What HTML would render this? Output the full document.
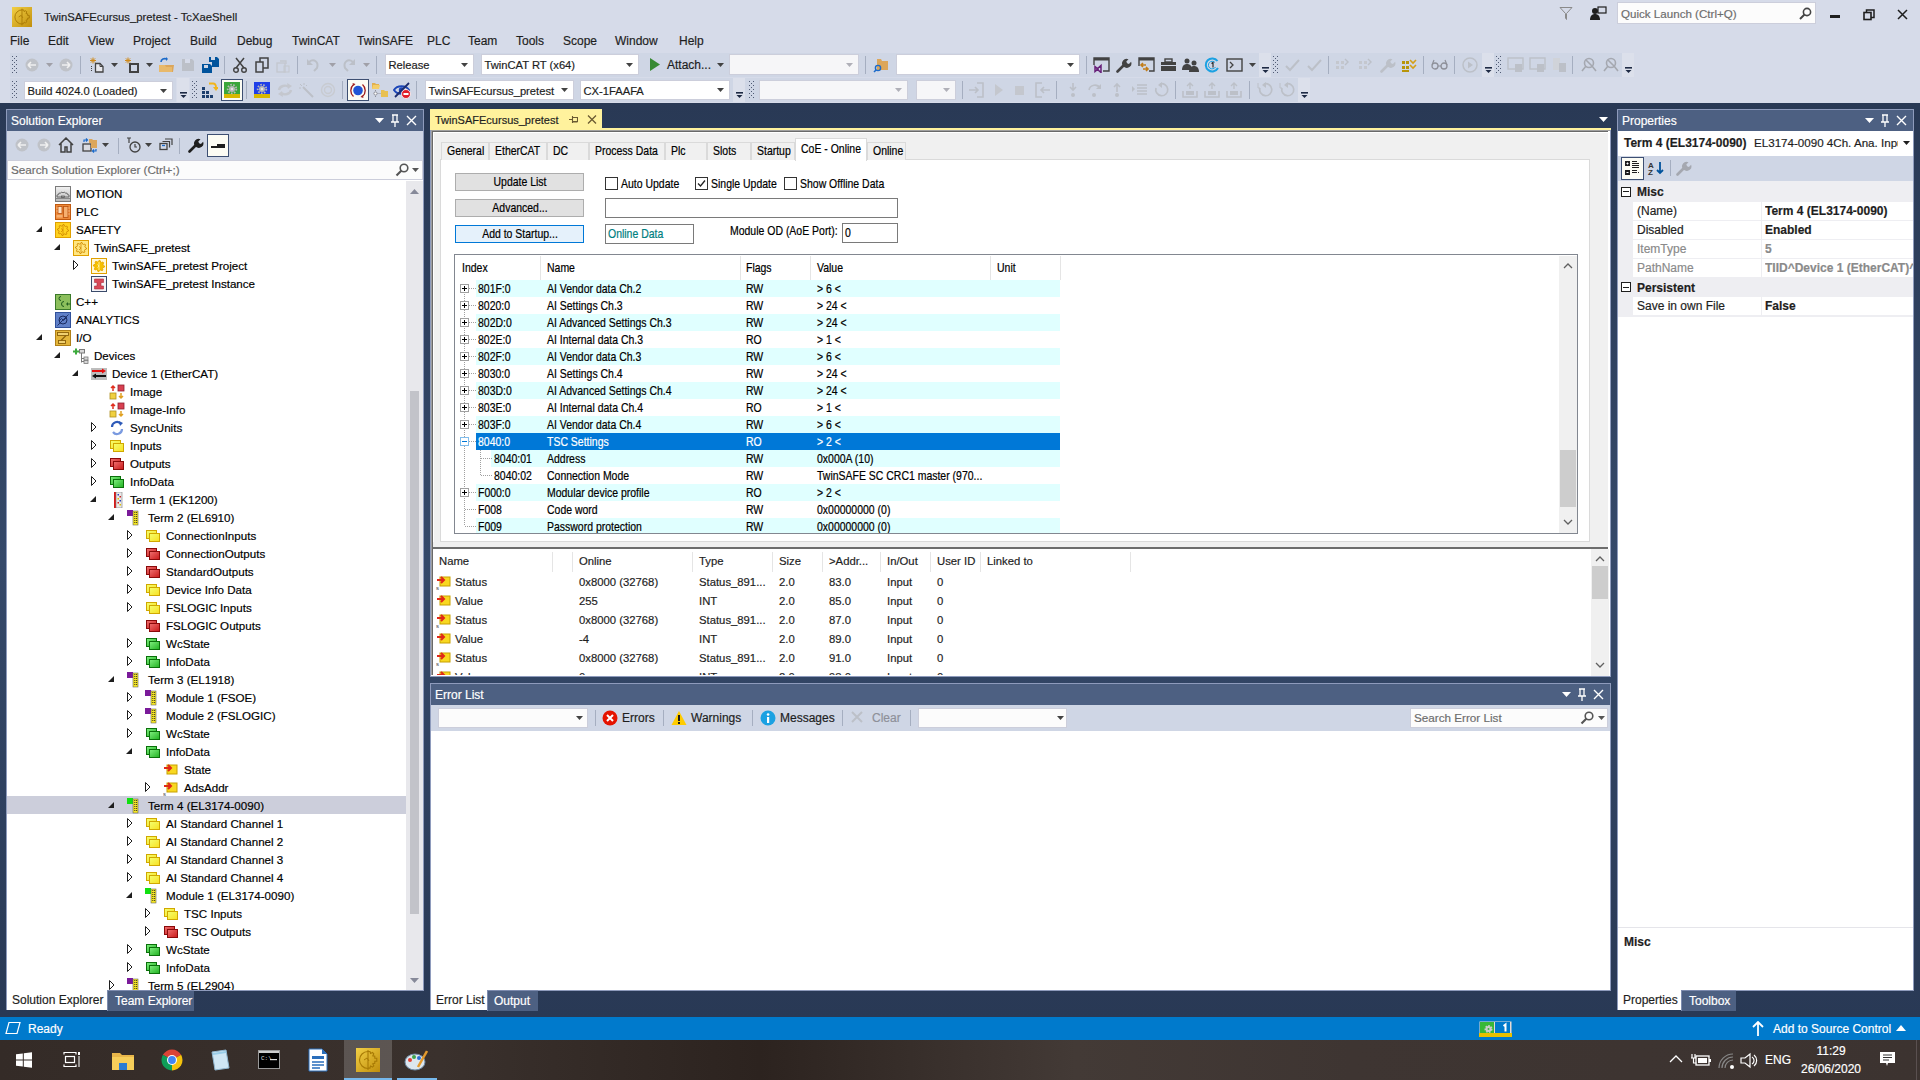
<!DOCTYPE html>
<html><head><meta charset="utf-8"><title>TwinSAFEcursus_pretest - TcXaeShell</title>
<style>
*{box-sizing:border-box;margin:0;padding:0}
html,body{width:1920px;height:1080px;overflow:hidden;background:#293955;font-family:"Liberation Sans",sans-serif;font-size:12px;color:#1e1e1e}
.a{position:absolute}
.t{position:absolute;white-space:nowrap;-webkit-text-stroke:0.18px currentColor}
svg{display:block}
</style></head><body>
<div class="a" style="left:0;top:103px;width:1920px;height:914px;background:linear-gradient(to bottom,#293955 0%,#35496A 50%,#293955 100%)"></div>
<div class="a" style="left:0px;top:0px;width:1920px;height:103px;background:#D6DBE9;"></div>
<svg class="a" style="left:12px;top:7px;" width="20" height="20" viewBox="0 0 20 20"><g transform="scale(0.8333)"><defs><linearGradient id="tg2" x1="0" y1="0" x2="1" y2="1"><stop offset="0" stop-color="#F2CF45"/><stop offset="1" stop-color="#C08E0C"/></linearGradient></defs><rect x="0" y="0" width="24" height="24" fill="url(#tg2)"/><path d="M12 3.5A8.5 8.5 0 0 0 12 20.5" fill="none" stroke="#A87A05" stroke-width="1.1"/><path d="M12 3.5h2l.5 2 2-1 1.3 1.3-1 2 2 .5v2h2v3h-2v2l-2 .5 1 2-1.3 1.3-2-1-.5 2h-2" fill="none" stroke="#A87A05" stroke-width="1.1"/><path d="M12 2v20" stroke="#A87A05" stroke-width="1.1"/><path d="M8 12l3-2 2 3" fill="none" stroke="#A87A05"/></g></svg>
<div class="t" style="left:44px;top:9.0px;line-height:16px;font-size:11.3px;color:#1E1E1E;">TwinSAFEcursus_pretest - TcXaeShell</div>
<svg class="a" style="left:1559px;top:6px;" width="14" height="15" viewBox="0 0 14 15"><path d="M1 1.5h12L7.5 7.5v6L6.5 12V7.5z" fill="none" stroke="#8A8A8A" stroke-width="1"/></svg>
<svg class="a" style="left:1590px;top:6px;" width="17" height="15" viewBox="0 0 17 15"><circle cx="5" cy="5" r="3" fill="#1E1E1E"/><path d="M0 14c0-4 2-6 5-6s5 2 5 6z" fill="#1E1E1E"/><rect x="8" y="1" width="8" height="6" fill="none" stroke="#1E1E1E" stroke-width="1.2"/></svg>
<div class="a" style="left:1617px;top:2px;width:199px;height:22px;background:#FCFCFC;border:1px solid #CCCEDB;"></div>
<div class="t" style="left:1621px;top:6.0px;line-height:16px;font-size:11.6px;color:#6D6D6D;">Quick Launch (Ctrl+Q)</div>
<svg class="a" style="left:1799px;top:7px;" width="13" height="14" viewBox="0 0 13 14"><circle cx="8" cy="5" r="3.6" fill="none" stroke="#444" stroke-width="1.6"/><path d="M5.5 7.5L1 12" stroke="#444" stroke-width="2"/></svg>
<div class="a" style="left:1830px;top:15px;width:10px;height:2.5px;background:#1E1E1E;"></div>
<svg class="a" style="left:1863px;top:9px;" width="12" height="12" viewBox="0 0 12 12"><rect x="1" y="3.5" width="7" height="7" fill="none" stroke="#1E1E1E" stroke-width="1.6"/><path d="M3.5 3.5V1H11v7.5H8" fill="none" stroke="#1E1E1E" stroke-width="1.5"/></svg>
<svg class="a" style="left:1897px;top:9px;" width="11" height="11" viewBox="0 0 11 11"><path d="M1 1L10 10M10 1L1 10" stroke="#1E1E1E" stroke-width="1.5"/></svg>
<div class="t" style="left:10px;top:33.0px;line-height:16px;font-size:12px;color:#1E1E1E;">File</div>
<div class="t" style="left:48px;top:33.0px;line-height:16px;font-size:12px;color:#1E1E1E;">Edit</div>
<div class="t" style="left:88px;top:33.0px;line-height:16px;font-size:12px;color:#1E1E1E;">View</div>
<div class="t" style="left:133px;top:33.0px;line-height:16px;font-size:12px;color:#1E1E1E;">Project</div>
<div class="t" style="left:190px;top:33.0px;line-height:16px;font-size:12px;color:#1E1E1E;">Build</div>
<div class="t" style="left:237px;top:33.0px;line-height:16px;font-size:12px;color:#1E1E1E;">Debug</div>
<div class="t" style="left:292px;top:33.0px;line-height:16px;font-size:12px;color:#1E1E1E;">TwinCAT</div>
<div class="t" style="left:357px;top:33.0px;line-height:16px;font-size:12px;color:#1E1E1E;">TwinSAFE</div>
<div class="t" style="left:427px;top:33.0px;line-height:16px;font-size:12px;color:#1E1E1E;">PLC</div>
<div class="t" style="left:468px;top:33.0px;line-height:16px;font-size:12px;color:#1E1E1E;">Team</div>
<div class="t" style="left:516px;top:33.0px;line-height:16px;font-size:12px;color:#1E1E1E;">Tools</div>
<div class="t" style="left:563px;top:33.0px;line-height:16px;font-size:12px;color:#1E1E1E;">Scope</div>
<div class="t" style="left:615px;top:33.0px;line-height:16px;font-size:12px;color:#1E1E1E;">Window</div>
<div class="t" style="left:679px;top:33.0px;line-height:16px;font-size:12px;color:#1E1E1E;">Help</div>
<div class="a" style="left:10px;top:53px;width:1249px;height:24px;background:#CFD6E5;"></div>
<div class="a" style="left:1271px;top:53px;width:211px;height:24px;background:#CFD6E5;"></div>
<div class="a" style="left:1494px;top:53px;width:128px;height:24px;background:#CFD6E5;"></div>
<div class="a" style="left:10px;top:78px;width:166px;height:24px;background:#CFD6E5;"></div>
<div class="a" style="left:190px;top:78px;width:543px;height:24px;background:#CFD6E5;"></div>
<div class="a" style="left:745px;top:78px;width:553px;height:24px;background:#CFD6E5;"></div>
<svg class="a" style="left:12px;top:56px;" width="5" height="17" viewBox="0 0 5 17"><rect x="0" y="0" width="1" height="1" fill="#505B74"/><rect x="4" y="0" width="1" height="1" fill="#505B74"/><rect x="0" y="4" width="1" height="1" fill="#505B74"/><rect x="4" y="4" width="1" height="1" fill="#505B74"/><rect x="0" y="8" width="1" height="1" fill="#505B74"/><rect x="4" y="8" width="1" height="1" fill="#505B74"/><rect x="0" y="12" width="1" height="1" fill="#505B74"/><rect x="4" y="12" width="1" height="1" fill="#505B74"/><rect x="0" y="16" width="1" height="1" fill="#505B74"/><rect x="4" y="16" width="1" height="1" fill="#505B74"/><rect x="2" y="2" width="1" height="1" fill="#505B74"/><rect x="2" y="6" width="1" height="1" fill="#505B74"/><rect x="2" y="10" width="1" height="1" fill="#505B74"/><rect x="2" y="14" width="1" height="1" fill="#505B74"/></svg>
<svg class="a" style="left:25px;top:58px;" width="14" height="14" viewBox="0 0 14 14"><circle cx="7" cy="7" r="6.5" fill="#BFC2C8"/><path d="M3 7h8M3 7l3-3M3 7l3 3" stroke="#F0F0F0" stroke-width="1.6" fill="none"/></svg>
<svg class="a" style="left:46px;top:63px;" width="7" height="4" viewBox="0 0 7 4"><path d="M0 0h7L3.5 4z" fill="#A0A0A8"/></svg>
<svg class="a" style="left:59px;top:58px;" width="14" height="14" viewBox="0 0 14 14"><circle cx="7" cy="7" r="6.5" fill="#BFC2C8"/><path d="M3 7h8M11 7l-3-3M11 7l-3 3" stroke="#F0F0F0" stroke-width="1.6" fill="none"/></svg>
<div class="a" style="left:80px;top:56px;width:1px;height:18px;background:#A5AEC0;"></div>
<svg class="a" style="left:89px;top:57px;" width="16" height="16" viewBox="0 0 16 16"><path d="M4 0.5v6M1 3.5h6M1.9 1.4l4.2 4.2M6.1 1.4L1.9 5.6" stroke="#D08A1A" stroke-width="1"/><path d="M6.5 6.5h4.5l3 3v5.5h-7.5z" fill="#E8E8EC" stroke="#424242" stroke-width="1.3"/><path d="M11 6.5v3h3" fill="none" stroke="#424242" stroke-width="1"/><path d="M2.5 9v5.5" stroke="#424242" stroke-width="1" stroke-dasharray="1 1"/></svg>
<svg class="a" style="left:111px;top:63px;" width="7" height="4" viewBox="0 0 7 4"><path d="M0 0h7L3.5 4z" fill="#424242"/></svg>
<svg class="a" style="left:124px;top:57px;" width="16" height="16" viewBox="0 0 16 16"><path d="M4 0.5v6M1 3.5h6M1.9 1.4l4.2 4.2M6.1 1.4L1.9 5.6" stroke="#D08A1A" stroke-width="1"/><rect x="6" y="7" width="8" height="8" fill="none" stroke="#424242" stroke-width="2"/></svg>
<svg class="a" style="left:146px;top:63px;" width="7" height="4" viewBox="0 0 7 4"><path d="M0 0h7L3.5 4z" fill="#424242"/></svg>
<svg class="a" style="left:158px;top:57px;" width="17" height="16" viewBox="0 0 17 16"><path d="M1 10v5h14l1-7H6z" fill="#DCA65A"/><path d="M1 8h6l1 2h6v5H1z" fill="#E8B96B"/><path d="M3 5c0-3 3-4 6-3" fill="none" stroke="#1B6AC9" stroke-width="1.6"/><path d="M8 0l2 2-2 2" fill="#1B6AC9"/></svg>
<svg class="a" style="left:180px;top:57px;" width="16" height="16" viewBox="0 0 16 16"><path d="M2 2h10l2 2v10H2z" fill="#BCC0C8"/><rect x="5" y="2" width="5" height="4" fill="#D6DBE9"/></svg>
<svg class="a" style="left:202px;top:56px;" width="18" height="17" viewBox="0 0 18 17"><path d="M0 8h8l2 2v7H0z" fill="#00539C"/><path d="M7 1h8l2 2v8h-7V6H7z" fill="#00539C"/><rect x="2" y="9" width="4" height="3" fill="#CFD6E5"/><rect x="9" y="1" width="4" height="3" fill="#CFD6E5"/></svg>
<div class="a" style="left:224px;top:56px;width:1px;height:18px;background:#A5AEC0;"></div>
<svg class="a" style="left:233px;top:57px;" width="14" height="16" viewBox="0 0 14 16"><path d="M3 1l8 10M11 1L3 11" stroke="#424242" stroke-width="1.5"/><circle cx="3" cy="13" r="2.3" fill="none" stroke="#424242" stroke-width="1.4"/><circle cx="11" cy="13" r="2.3" fill="none" stroke="#424242" stroke-width="1.4"/></svg>
<svg class="a" style="left:255px;top:57px;" width="14" height="16" viewBox="0 0 14 16"><rect x="1" y="5" width="7" height="10" fill="none" stroke="#424242" stroke-width="1.5"/><path d="M5 5V1h8v10H8" fill="none" stroke="#424242" stroke-width="1.5"/></svg>
<svg class="a" style="left:276px;top:57px;" width="14" height="16" viewBox="0 0 14 16"><rect x="1" y="6" width="8" height="9" fill="none" stroke="#C4C7CE" stroke-width="1.3"/><path d="M4 4h6v3" fill="none" stroke="#C4C7CE" stroke-width="1.3"/><rect x="8" y="9" width="5" height="6" fill="none" stroke="#C4C7CE"/></svg>
<div class="a" style="left:297px;top:56px;width:1px;height:18px;background:#A5AEC0;"></div>
<svg class="a" style="left:306px;top:57px;" width="14" height="16" viewBox="0 0 14 16"><path d="M3 5c5-4 10 0 8 6l-3 3" fill="none" stroke="#BCC0C8" stroke-width="2"/><path d="M1 2v6h6z" fill="#BCC0C8"/></svg>
<svg class="a" style="left:329px;top:63px;" width="7" height="4" viewBox="0 0 7 4"><path d="M0 0h7L3.5 4z" fill="#A0A0A8"/></svg>
<svg class="a" style="left:342px;top:57px;" width="14" height="16" viewBox="0 0 14 16"><path d="M11 5C6 1 1 5 3 11l3 3" fill="none" stroke="#BCC0C8" stroke-width="2"/><path d="M13 2v6H7z" fill="#BCC0C8"/></svg>
<svg class="a" style="left:363px;top:63px;" width="7" height="4" viewBox="0 0 7 4"><path d="M0 0h7L3.5 4z" fill="#A0A0A8"/></svg>
<div class="a" style="left:376px;top:56px;width:1px;height:18px;background:#A5AEC0;"></div>
<div class="a" style="left:385px;top:54px;width:89px;height:21px;background:#FFFFFF;border:1px solid #CCCEDB;"></div>
<div class="t" style="left:388.5px;top:57.0px;line-height:16px;font-size:11.2px;color:#1e1e1e;">Release</div>
<svg class="a" style="left:461px;top:62.5px;" width="7" height="4" viewBox="0 0 7 4"><path d="M0 0h7L3.5 4z" fill="#424242"/></svg>
<div class="a" style="left:481px;top:54px;width:158px;height:21px;background:#FFFFFF;border:1px solid #CCCEDB;"></div>
<div class="t" style="left:484.5px;top:57.0px;line-height:16px;font-size:11.2px;color:#1e1e1e;">TwinCAT RT (x64)</div>
<svg class="a" style="left:626px;top:62.5px;" width="7" height="4" viewBox="0 0 7 4"><path d="M0 0h7L3.5 4z" fill="#424242"/></svg>
<svg class="a" style="left:650px;top:58px;" width="10" height="13" viewBox="0 0 10 13"><path d="M0 0L10 6.5L0 13z" fill="#388A34"/></svg>
<div class="t" style="left:667px;top:57.0px;line-height:16px;font-size:12px;color:#1e1e1e;">Attach...</div>
<svg class="a" style="left:717px;top:63px;" width="7" height="4" viewBox="0 0 7 4"><path d="M0 0h7L3.5 4z" fill="#424242"/></svg>
<div class="a" style="left:729px;top:54px;width:130px;height:21px;background:#F6F6F8;border:1px solid #CCCEDB;"></div>
<svg class="a" style="left:846px;top:62.5px;" width="7" height="4" viewBox="0 0 7 4"><path d="M0 0h7L3.5 4z" fill="#B0B0B8"/></svg>
<div class="a" style="left:865px;top:56px;width:1px;height:18px;background:#A5AEC0;"></div>
<svg class="a" style="left:873px;top:57px;" width="16" height="16" viewBox="0 0 16 16"><path d="M4 2h4l1 2h6v9H4z" fill="#DCA65A"/><circle cx="5" cy="11" r="2.6" fill="none" stroke="#1B6AC9" stroke-width="1.4"/><path d="M3 13l-2 2" stroke="#1B6AC9" stroke-width="1.6"/></svg>
<div class="a" style="left:896px;top:54px;width:184px;height:21px;background:#FFFFFF;border:1px solid #CCCEDB;"></div>
<svg class="a" style="left:1067px;top:62.5px;" width="7" height="4" viewBox="0 0 7 4"><path d="M0 0h7L3.5 4z" fill="#424242"/></svg>
<div class="a" style="left:1086px;top:56px;width:1px;height:18px;background:#A5AEC0;"></div>
<svg class="a" style="left:1093px;top:57px;" width="17" height="16" viewBox="0 0 17 16"><path d="M1 8V1h15v13H10" fill="none" stroke="#424242" stroke-width="1.4"/><rect x="1" y="1" width="15" height="2.5" fill="#424242"/><path d="M2 9.5l3 2.5-3 2.5zM4 12l4-3.5v7z" fill="none" stroke="#68217A" stroke-width="1.5"/></svg>
<svg class="a" style="left:1116px;top:57px;" width="16" height="16" viewBox="0 0 16 16"><path d="M1.5 14.5L8 8" stroke="#424242" stroke-width="2.6" stroke-linecap="round"/><path d="M7 9A4.5 4.5 0 0 1 12.5 2.2L10.3 4.4l.8 1.8 1.8.8 2.2-2.2A4.5 4.5 0 0 1 8.6 10.3z" fill="#424242"/></svg>
<svg class="a" style="left:1138px;top:57px;" width="17" height="16" viewBox="0 0 17 16"><path d="M1 9V1h15v13H11" fill="none" stroke="#424242" stroke-width="1.4"/><rect x="1" y="1" width="15" height="2.5" fill="#424242"/><path d="M3 8h5M5 6L3 8l2 2M5 12h5M8 10l2 2-2 2" fill="none" stroke="#C27D1A" stroke-width="1.6"/></svg>
<svg class="a" style="left:1160px;top:57px;" width="17" height="16" viewBox="0 0 17 16"><rect x="1" y="5" width="15" height="9" fill="#424242"/><rect x="5" y="2" width="7" height="3" fill="none" stroke="#424242" stroke-width="1.4"/><rect x="1" y="8" width="15" height="1" fill="#CFD6E5"/></svg>
<svg class="a" style="left:1182px;top:57px;" width="17" height="16" viewBox="0 0 17 16"><circle cx="5" cy="4" r="2.5" fill="#424242"/><path d="M0 13c0-4 2-6 5-6s5 2 5 6z" fill="#424242"/><circle cx="12" cy="6" r="2.5" fill="#424242"/><path d="M7 15c0-4 2-6 5-6s5 2 5 6z" fill="#424242"/></svg>
<svg class="a" style="left:1204px;top:57px;" width="16" height="16" viewBox="0 0 16 16"><path d="M13.5 4A6.5 6.5 0 1 0 14 11" fill="none" stroke="#1BA1E2" stroke-width="2"/><path d="M11 5.5A3.8 3.8 0 1 0 11.5 10" fill="none" stroke="#1BA1E2" stroke-width="1"/><path d="M7.5 6.5l1.5-1v5" fill="none" stroke="#1e1e1e" stroke-width="1.1"/></svg>
<svg class="a" style="left:1226px;top:58px;" width="17" height="14" viewBox="0 0 17 14"><rect x="1" y="1" width="15" height="12" fill="none" stroke="#424242" stroke-width="1.4"/><path d="M4 4l3 3-3 3" fill="none" stroke="#424242" stroke-width="1.3"/></svg>
<svg class="a" style="left:1249px;top:63px;" width="7" height="4" viewBox="0 0 7 4"><path d="M0 0h7L3.5 4z" fill="#424242"/></svg>
<div class="a" style="left:1259px;top:53px;width:12px;height:24px;background:#DCE0EB;"></div>
<svg class="a" style="left:1262px;top:67px;" width="7" height="7" viewBox="0 0 7 7"><rect x="0" y="0" width="7" height="1.6" fill="#1E2A44"/><path d="M0.5 3h6L3.5 6z" fill="#1E2A44"/></svg>
<svg class="a" style="left:1273px;top:56px;" width="5" height="17" viewBox="0 0 5 17"><rect x="0" y="0" width="1" height="1" fill="#505B74"/><rect x="4" y="0" width="1" height="1" fill="#505B74"/><rect x="0" y="4" width="1" height="1" fill="#505B74"/><rect x="4" y="4" width="1" height="1" fill="#505B74"/><rect x="0" y="8" width="1" height="1" fill="#505B74"/><rect x="4" y="8" width="1" height="1" fill="#505B74"/><rect x="0" y="12" width="1" height="1" fill="#505B74"/><rect x="4" y="12" width="1" height="1" fill="#505B74"/><rect x="0" y="16" width="1" height="1" fill="#505B74"/><rect x="4" y="16" width="1" height="1" fill="#505B74"/><rect x="2" y="2" width="1" height="1" fill="#505B74"/><rect x="2" y="6" width="1" height="1" fill="#505B74"/><rect x="2" y="10" width="1" height="1" fill="#505B74"/><rect x="2" y="14" width="1" height="1" fill="#505B74"/></svg>
<svg class="a" style="left:1284px;top:57px;" width="17" height="16" viewBox="0 0 17 16"><path d="M2 9l4 4 9-10" fill="none" stroke="#BCC0C8" stroke-width="2"/></svg>
<svg class="a" style="left:1306px;top:57px;" width="17" height="16" viewBox="0 0 17 16"><path d="M2 9l4 4 9-10" fill="none" stroke="#BCC0C8" stroke-width="2"/></svg>
<div class="a" style="left:1328px;top:56px;width:1px;height:18px;background:#A5AEC0;"></div>
<svg class="a" style="left:1334px;top:57px;" width="17" height="16" viewBox="0 0 17 16"><rect x="2" y="4" width="3" height="3" fill="#C4C7CE"/><rect x="2" y="9" width="3" height="3" fill="#C4C7CE"/><rect x="7" y="9" width="3" height="3" fill="#C4C7CE"/><rect x="7" y="4" width="3" height="3" fill="#C4C7CE"/><path d="M11 2l3 3-3 3" fill="none" stroke="#BCC0C8" stroke-width="1.4"/></svg>
<svg class="a" style="left:1357px;top:57px;" width="17" height="16" viewBox="0 0 17 16"><rect x="2" y="4" width="3" height="3" fill="#C4C7CE"/><rect x="2" y="9" width="3" height="3" fill="#C4C7CE"/><rect x="7" y="9" width="3" height="3" fill="#C4C7CE"/><rect x="7" y="4" width="3" height="3" fill="#C4C7CE"/><path d="M11 2l3 3-3 3" fill="none" stroke="#BCC0C8" stroke-width="1.4"/></svg>
<svg class="a" style="left:1380px;top:57px;" width="16" height="16" viewBox="0 0 16 16"><path d="M1.5 14.5L8 8" stroke="#BCC0C8" stroke-width="2.6" stroke-linecap="round"/><path d="M7 9A4.5 4.5 0 0 1 12.5 2.2L10.3 4.4l.8 1.8 1.8.8 2.2-2.2A4.5 4.5 0 0 1 8.6 10.3z" fill="#BCC0C8"/></svg>
<svg class="a" style="left:1401px;top:57px;" width="17" height="16" viewBox="0 0 17 16"><rect x="1" y="4" width="3" height="3" fill="#B8950A"/><rect x="1" y="9" width="3" height="3" fill="#B8950A"/><rect x="5" y="4" width="3" height="3" fill="#B8950A"/><rect x="5" y="9" width="3" height="3" fill="#B8950A"/><rect x="1" y="13" width="7" height="2" fill="#B8950A"/><path d="M9 3l3 3 3-3M9 8l3 3 3-3" fill="none" stroke="#D4A017" stroke-width="1.6"/></svg>
<div class="a" style="left:1423px;top:56px;width:1px;height:18px;background:#A5AEC0;"></div>
<svg class="a" style="left:1431px;top:59px;" width="18" height="11" viewBox="0 0 18 11"><circle cx="4" cy="7" r="3" fill="none" stroke="#8E9099" stroke-width="1.3"/><circle cx="13" cy="7" r="3" fill="none" stroke="#8E9099" stroke-width="1.3"/><path d="M7 7h3M1 6l2-5M16 6l-2-5" stroke="#8E9099" stroke-width="1.2" fill="none"/></svg>
<div class="a" style="left:1454px;top:56px;width:1px;height:18px;background:#A5AEC0;"></div>
<svg class="a" style="left:1462px;top:57px;" width="16" height="16" viewBox="0 0 16 16"><circle cx="8" cy="8" r="7" fill="none" stroke="#BCC0C8" stroke-width="1.5"/><path d="M6 4.5l5 3.5-5 3.5z" fill="#BCC0C8"/></svg>
<div class="a" style="left:1482px;top:53px;width:12px;height:24px;background:#DCE0EB;"></div>
<svg class="a" style="left:1485px;top:67px;" width="7" height="7" viewBox="0 0 7 7"><rect x="0" y="0" width="7" height="1.6" fill="#1E2A44"/><path d="M0.5 3h6L3.5 6z" fill="#1E2A44"/></svg>
<svg class="a" style="left:1496px;top:56px;" width="5" height="17" viewBox="0 0 5 17"><rect x="0" y="0" width="1" height="1" fill="#505B74"/><rect x="4" y="0" width="1" height="1" fill="#505B74"/><rect x="0" y="4" width="1" height="1" fill="#505B74"/><rect x="4" y="4" width="1" height="1" fill="#505B74"/><rect x="0" y="8" width="1" height="1" fill="#505B74"/><rect x="4" y="8" width="1" height="1" fill="#505B74"/><rect x="0" y="12" width="1" height="1" fill="#505B74"/><rect x="4" y="12" width="1" height="1" fill="#505B74"/><rect x="0" y="16" width="1" height="1" fill="#505B74"/><rect x="4" y="16" width="1" height="1" fill="#505B74"/><rect x="2" y="2" width="1" height="1" fill="#505B74"/><rect x="2" y="6" width="1" height="1" fill="#505B74"/><rect x="2" y="10" width="1" height="1" fill="#505B74"/><rect x="2" y="14" width="1" height="1" fill="#505B74"/></svg>
<svg class="a" style="left:1507px;top:57px;" width="17" height="16" viewBox="0 0 17 16"><rect x="1" y="1" width="15" height="11" fill="none" stroke="#BCC0C8" stroke-width="1.4"/><rect x="8" y="7" width="7" height="8" fill="#BCC0C8"/></svg>
<svg class="a" style="left:1529px;top:57px;" width="17" height="16" viewBox="0 0 17 16"><rect x="1" y="1" width="15" height="11" fill="none" stroke="#BCC0C8" stroke-width="1.4"/><rect x="8" y="7" width="7" height="8" fill="#BCC0C8"/></svg>
<svg class="a" style="left:1551px;top:57px;" width="17" height="16" viewBox="0 0 17 16"><rect x="2" y="1" width="7" height="12" fill="#D0D3D9"/><rect x="8" y="6" width="7" height="9" fill="#BCC0C8"/></svg>
<div class="a" style="left:1572px;top:56px;width:1px;height:18px;background:#A5AEC0;"></div>
<svg class="a" style="left:1581px;top:57px;" width="17" height="16" viewBox="0 0 17 16"><circle cx="8" cy="6" r="4.5" fill="none" stroke="#A5A8B0" stroke-width="1.6"/><path d="M5 9l-4 5M11 9l4 5M5 3l6 6" stroke="#A5A8B0" stroke-width="1.6"/></svg>
<svg class="a" style="left:1603px;top:57px;" width="17" height="16" viewBox="0 0 17 16"><circle cx="8" cy="6" r="4.5" fill="none" stroke="#A5A8B0" stroke-width="1.6"/><path d="M5 9l-4 5M11 9l4 5M5 3l6 6" stroke="#A5A8B0" stroke-width="1.6"/></svg>
<div class="a" style="left:1622px;top:53px;width:12px;height:24px;background:#DCE0EB;"></div>
<svg class="a" style="left:1625px;top:67px;" width="7" height="7" viewBox="0 0 7 7"><rect x="0" y="0" width="7" height="1.6" fill="#1E2A44"/><path d="M0.5 3h6L3.5 6z" fill="#1E2A44"/></svg>
<svg class="a" style="left:12px;top:81px;" width="5" height="17" viewBox="0 0 5 17"><rect x="0" y="0" width="1" height="1" fill="#505B74"/><rect x="4" y="0" width="1" height="1" fill="#505B74"/><rect x="0" y="4" width="1" height="1" fill="#505B74"/><rect x="4" y="4" width="1" height="1" fill="#505B74"/><rect x="0" y="8" width="1" height="1" fill="#505B74"/><rect x="4" y="8" width="1" height="1" fill="#505B74"/><rect x="0" y="12" width="1" height="1" fill="#505B74"/><rect x="4" y="12" width="1" height="1" fill="#505B74"/><rect x="0" y="16" width="1" height="1" fill="#505B74"/><rect x="4" y="16" width="1" height="1" fill="#505B74"/><rect x="2" y="2" width="1" height="1" fill="#505B74"/><rect x="2" y="6" width="1" height="1" fill="#505B74"/><rect x="2" y="10" width="1" height="1" fill="#505B74"/><rect x="2" y="14" width="1" height="1" fill="#505B74"/></svg>
<div class="a" style="left:24px;top:81px;width:149px;height:19px;background:#FFFFFF;border:1px solid #CCCEDB;"></div>
<div class="t" style="left:27.5px;top:83.0px;line-height:16px;font-size:11.2px;color:#1e1e1e;">Build 4024.0 (Loaded)</div>
<svg class="a" style="left:160px;top:88.5px;" width="7" height="4" viewBox="0 0 7 4"><path d="M0 0h7L3.5 4z" fill="#424242"/></svg>
<div class="a" style="left:177px;top:78px;width:12px;height:24px;background:#DCE0EB;"></div>
<svg class="a" style="left:180px;top:92px;" width="7" height="7" viewBox="0 0 7 7"><rect x="0" y="0" width="7" height="1.6" fill="#1E2A44"/><path d="M0.5 3h6L3.5 6z" fill="#1E2A44"/></svg>
<svg class="a" style="left:192px;top:81px;" width="5" height="17" viewBox="0 0 5 17"><rect x="0" y="0" width="1" height="1" fill="#505B74"/><rect x="4" y="0" width="1" height="1" fill="#505B74"/><rect x="0" y="4" width="1" height="1" fill="#505B74"/><rect x="4" y="4" width="1" height="1" fill="#505B74"/><rect x="0" y="8" width="1" height="1" fill="#505B74"/><rect x="4" y="8" width="1" height="1" fill="#505B74"/><rect x="0" y="12" width="1" height="1" fill="#505B74"/><rect x="4" y="12" width="1" height="1" fill="#505B74"/><rect x="0" y="16" width="1" height="1" fill="#505B74"/><rect x="4" y="16" width="1" height="1" fill="#505B74"/><rect x="2" y="2" width="1" height="1" fill="#505B74"/><rect x="2" y="6" width="1" height="1" fill="#505B74"/><rect x="2" y="10" width="1" height="1" fill="#505B74"/><rect x="2" y="14" width="1" height="1" fill="#505B74"/></svg>
<svg class="a" style="left:201px;top:82px;" width="17" height="16" viewBox="0 0 17 16"><rect x="1" y="5" width="3" height="3" fill="#1C3E6E"/><rect x="1" y="9" width="3" height="3" fill="#1C3E6E"/><rect x="5" y="9" width="3" height="3" fill="#1C3E6E"/><rect x="1" y="13" width="3" height="3" fill="#1C3E6E"/><rect x="5" y="13" width="3" height="3" fill="#1C3E6E"/><rect x="9" y="13" width="3" height="3" fill="#1C3E6E"/><path d="M8 1.5h4c2 0 3 1.5 3 4" fill="none" stroke="#F2B51A" stroke-width="1.8"/><path d="M12 5h6l-3 4z" fill="#F2B51A"/></svg>
<div class="a" style="left:221px;top:79px;width:22px;height:22px;background:#FCFCF4;border:1px solid #3D4F72;"></div>
<svg class="a" style="left:224px;top:82px;" width="16" height="16" viewBox="0 0 16 16"><rect x="0" y="0" width="16" height="12" fill="#3AA63A"/><rect x="0" y="12" width="16" height="4" fill="#D8B800"/><circle cx="8" cy="7" r="3" fill="#B8B8B8"/><circle cx="8" cy="7" r="4.3" fill="none" stroke="#B8B8B8" stroke-width="1.8" stroke-dasharray="1.6 1.4"/><circle cx="8" cy="7" r="1.3" fill="#fff" opacity="0.6"/></svg>
<div class="a" style="left:246px;top:81px;width:1px;height:18px;background:#A5AEC0;"></div>
<svg class="a" style="left:254px;top:82px;" width="16" height="16" viewBox="0 0 16 16"><rect x="0" y="0" width="16" height="12" fill="#1F3FE8"/><rect x="0" y="12" width="16" height="4" fill="#D8B800"/><circle cx="8" cy="7" r="3" fill="#B8B8B8"/><circle cx="8" cy="7" r="4.3" fill="none" stroke="#B8B8B8" stroke-width="1.8" stroke-dasharray="1.6 1.4"/><circle cx="8" cy="7" r="1.3" fill="#fff" opacity="0.6"/></svg>
<svg class="a" style="left:277px;top:82px;" width="16" height="16" viewBox="0 0 16 16"><path d="M2 8a6 5 0 0 1 10-3" fill="none" stroke="#C4C7CE" stroke-width="2.4"/><path d="M10 1l5 3-4 3z" fill="#C4C7CE"/><path d="M14 8a6 5 0 0 1-10 3" fill="none" stroke="#C4C7CE" stroke-width="2.4"/><path d="M6 15l-5-3 4-3z" fill="#C4C7CE"/></svg>
<svg class="a" style="left:298px;top:82px;" width="16" height="16" viewBox="0 0 16 16"><path d="M5 5l10 10" stroke="#BCC0C8" stroke-width="2"/><path d="M2 2l2 2M6 1v2M1 6h2M9 3l-1 1" stroke="#BCC0C8"/></svg>
<svg class="a" style="left:320px;top:82px;" width="16" height="16" viewBox="0 0 16 16"><circle cx="8" cy="8" r="6.5" fill="none" stroke="#C8CBD1" stroke-width="1.4"/><circle cx="8" cy="8" r="3.5" fill="none" stroke="#C8CBD1" stroke-width="1.4"/></svg>
<div class="a" style="left:342px;top:81px;width:1px;height:18px;background:#A5AEC0;"></div>
<div class="a" style="left:347px;top:79px;width:22px;height:22px;background:#FCFCF4;border:1px solid #3D4F72;"></div>
<svg class="a" style="left:350px;top:82px;" width="16" height="16" viewBox="0 0 16 16"><circle cx="8" cy="8.5" r="4.8" fill="#1F55D6"/><path d="M3.5 2.5a8 8 0 0 0 0 12M12.5 2.5a8 8 0 0 1 0 12" fill="none" stroke="#9E1B1B" stroke-width="1.3"/><path d="M2.5 1l3 1-2 2z M13.5 16l-3-1 2-2z" fill="#9E1B1B"/></svg>
<svg class="a" style="left:372px;top:82px;" width="17" height="16" viewBox="0 0 17 16"><path d="M0 1h3l1 1h3v5H0z" fill="#E0B050"/><path d="M1 3h7l-1 4H0z" fill="#F4CE68"/><path d="M3.5 8v7M3.5 11.5h6" stroke="#8E9099" stroke-dasharray="1 1"/><circle cx="3.5" cy="11.5" r="1.6" fill="#fff" stroke="#8E9099"/><path d="M9 8h3l1 1h3v6H9z" fill="#E8C050"/></svg>
<svg class="a" style="left:393px;top:81px;" width="18" height="18" viewBox="0 0 18 18"><path d="M1 9c3-5 12-5 15 0-3 5-12 5-15 0z" fill="none" stroke="#1C46B8" stroke-width="2"/><circle cx="8.5" cy="9" r="2.7" fill="#1C46B8"/><path d="M2 16L16 2" stroke="#1C2C6E" stroke-width="1.8"/><circle cx="13" cy="13" r="4.5" fill="#E01E2A" stroke="#fff" stroke-width="0.8"/><rect x="10.5" y="12" width="5" height="2" fill="#fff"/></svg>
<div class="a" style="left:416px;top:81px;width:1px;height:18px;background:#A5AEC0;"></div>
<div class="a" style="left:425px;top:80px;width:149px;height:20px;background:#FFFFFF;border:1px solid #CCCEDB;"></div>
<div class="t" style="left:428.5px;top:82.5px;line-height:16px;font-size:11.2px;color:#1e1e1e;">TwinSAFEcursus_pretest</div>
<svg class="a" style="left:561px;top:88.0px;" width="7" height="4" viewBox="0 0 7 4"><path d="M0 0h7L3.5 4z" fill="#424242"/></svg>
<div class="a" style="left:580px;top:80px;width:150px;height:20px;background:#FFFFFF;border:1px solid #CCCEDB;"></div>
<div class="t" style="left:583.5px;top:82.5px;line-height:16px;font-size:11.2px;color:#1e1e1e;">CX-1FAAFA</div>
<svg class="a" style="left:717px;top:88.0px;" width="7" height="4" viewBox="0 0 7 4"><path d="M0 0h7L3.5 4z" fill="#424242"/></svg>
<div class="a" style="left:733px;top:78px;width:12px;height:24px;background:#DCE0EB;"></div>
<svg class="a" style="left:736px;top:92px;" width="7" height="7" viewBox="0 0 7 7"><rect x="0" y="0" width="7" height="1.6" fill="#1E2A44"/><path d="M0.5 3h6L3.5 6z" fill="#1E2A44"/></svg>
<svg class="a" style="left:749px;top:81px;" width="5" height="17" viewBox="0 0 5 17"><rect x="0" y="0" width="1" height="1" fill="#505B74"/><rect x="4" y="0" width="1" height="1" fill="#505B74"/><rect x="0" y="4" width="1" height="1" fill="#505B74"/><rect x="4" y="4" width="1" height="1" fill="#505B74"/><rect x="0" y="8" width="1" height="1" fill="#505B74"/><rect x="4" y="8" width="1" height="1" fill="#505B74"/><rect x="0" y="12" width="1" height="1" fill="#505B74"/><rect x="4" y="12" width="1" height="1" fill="#505B74"/><rect x="0" y="16" width="1" height="1" fill="#505B74"/><rect x="4" y="16" width="1" height="1" fill="#505B74"/><rect x="2" y="2" width="1" height="1" fill="#505B74"/><rect x="2" y="6" width="1" height="1" fill="#505B74"/><rect x="2" y="10" width="1" height="1" fill="#505B74"/><rect x="2" y="14" width="1" height="1" fill="#505B74"/></svg>
<div class="a" style="left:759px;top:80px;width:149px;height:20px;background:#F6F6F8;border:1px solid #CCCEDB;"></div>
<svg class="a" style="left:895px;top:88.0px;" width="7" height="4" viewBox="0 0 7 4"><path d="M0 0h7L3.5 4z" fill="#B0B0B8"/></svg>
<div class="a" style="left:916px;top:80px;width:40px;height:20px;background:#F6F6F8;border:1px solid #CCCEDB;"></div>
<svg class="a" style="left:943px;top:88.0px;" width="7" height="4" viewBox="0 0 7 4"><path d="M0 0h7L3.5 4z" fill="#B0B0B8"/></svg>
<div class="a" style="left:962px;top:81px;width:1px;height:18px;background:#A5AEC0;"></div>
<svg class="a" style="left:968px;top:82px;" width="16" height="16" viewBox="0 0 16 16"><path d="M1 8h9M7 5l3 3-3 3" stroke="#BCC0C8" stroke-width="1.6" fill="none"/><path d="M9 1h6v14H9" stroke="#BCC0C8" stroke-width="1.6" fill="none"/></svg>
<svg class="a" style="left:990px;top:82px;" width="16" height="16" viewBox="0 0 16 16"><path d="M5 2l8 6-8 6z" fill="#C4C7CE"/></svg>
<svg class="a" style="left:1012px;top:82px;" width="16" height="16" viewBox="0 0 16 16"><rect x="3" y="4" width="9" height="9" fill="#C4C7CE"/></svg>
<svg class="a" style="left:1035px;top:82px;" width="16" height="16" viewBox="0 0 16 16"><path d="M15 8H6M9 5L6 8l3 3" stroke="#BCC0C8" stroke-width="1.6" fill="none"/><path d="M7 1H1v14h6" stroke="#BCC0C8" stroke-width="1.6" fill="none"/></svg>
<div class="a" style="left:1056px;top:81px;width:1px;height:18px;background:#A5AEC0;"></div>
<svg class="a" style="left:1065px;top:82px;" width="16" height="16" viewBox="0 0 16 16"><path d="M8 1v7M5 5l3 3 3-3" stroke="#BCC0C8" stroke-width="1.6" fill="none"/><circle cx="8" cy="13" r="2" fill="#BCC0C8"/></svg>
<svg class="a" style="left:1087px;top:82px;" width="16" height="16" viewBox="0 0 16 16"><path d="M2 8a6 6 0 0 1 11-2" stroke="#BCC0C8" stroke-width="1.6" fill="none"/><path d="M14 2v5h-5z" fill="#BCC0C8"/><circle cx="7" cy="13" r="2" fill="#BCC0C8"/></svg>
<svg class="a" style="left:1109px;top:82px;" width="16" height="16" viewBox="0 0 16 16"><path d="M8 10V2M5 5l3-3 3 3" stroke="#BCC0C8" stroke-width="1.6" fill="none"/><circle cx="8" cy="13" r="2" fill="#BCC0C8"/></svg>
<svg class="a" style="left:1131px;top:82px;" width="16" height="16" viewBox="0 0 16 16"><path d="M1 4l3 3-3 3z" fill="#BCC0C8"/><path d="M6 3h10M6 6h10M6 9h10M6 12h10" stroke="#BCC0C8" stroke-width="1.4"/></svg>
<svg class="a" style="left:1153px;top:82px;" width="16" height="16" viewBox="0 0 16 16"><path d="M3 6a6 6 0 1 0 4-4" fill="none" stroke="#BCC0C8" stroke-width="1.7"/><path d="M9 0L5 3l4 3z" fill="#BCC0C8"/></svg>
<div class="a" style="left:1175px;top:81px;width:1px;height:18px;background:#A5AEC0;"></div>
<svg class="a" style="left:1182px;top:82px;" width="16" height="16" viewBox="0 0 16 16"><path d="M1 9v6h14V9" stroke="#BCC0C8" stroke-width="1.6" fill="none"/><rect x="4" y="9" width="8" height="4" fill="#BCC0C8"/><path d="M8 1v6M5 4l3-3 3 3" stroke="#BCC0C8" stroke-width="1.4" fill="none"/></svg>
<svg class="a" style="left:1204px;top:82px;" width="16" height="16" viewBox="0 0 16 16"><path d="M1 9v6h14V9" stroke="#BCC0C8" stroke-width="1.6" fill="none"/><rect x="4" y="9" width="8" height="4" fill="#BCC0C8"/><path d="M8 1v6M5 4l3-3 3 3" stroke="#BCC0C8" stroke-width="1.4" fill="none"/></svg>
<svg class="a" style="left:1226px;top:82px;" width="16" height="16" viewBox="0 0 16 16"><path d="M1 9v6h14V9" stroke="#BCC0C8" stroke-width="1.6" fill="none"/><rect x="4" y="9" width="8" height="4" fill="#BCC0C8"/><path d="M8 1v6M5 4l3-3 3 3" stroke="#BCC0C8" stroke-width="1.4" fill="none"/></svg>
<div class="a" style="left:1249px;top:81px;width:1px;height:18px;background:#A5AEC0;"></div>
<svg class="a" style="left:1257px;top:82px;" width="16" height="16" viewBox="0 0 16 16"><path d="M3 6a6 6 0 1 0 4-4" fill="none" stroke="#BCC0C8" stroke-width="1.7"/><path d="M9 0L5 3l4 3z" fill="#BCC0C8"/><path d="M1 1v5h2" stroke="#BCC0C8" fill="none"/></svg>
<svg class="a" style="left:1279px;top:82px;" width="16" height="16" viewBox="0 0 16 16"><path d="M3 6a6 6 0 1 0 4-4" fill="none" stroke="#BCC0C8" stroke-width="1.7"/><path d="M9 0L5 3l4 3z" fill="#BCC0C8"/><path d="M1 1v5h2" stroke="#BCC0C8" fill="none"/></svg>
<div class="a" style="left:1298px;top:78px;width:12px;height:24px;background:#DCE0EB;"></div>
<svg class="a" style="left:1301px;top:92px;" width="7" height="7" viewBox="0 0 7 7"><rect x="0" y="0" width="7" height="1.6" fill="#1E2A44"/><path d="M0.5 3h6L3.5 6z" fill="#1E2A44"/></svg>
<div class="a" style="left:6px;top:109px;width:418px;height:882px;background:#8E9BBC;"></div>
<div class="a" style="left:7px;top:110px;width:416px;height:880px;background:#FFFFFF;"></div>
<div class="a" style="left:7px;top:110px;width:416px;height:21px;background:#4D6082;"></div>
<div class="t" style="left:11px;top:112.5px;line-height:16px;font-size:12px;color:#FFFFFF;">Solution Explorer</div>
<svg class="a" style="left:375px;top:118px;" width="9" height="5" viewBox="0 0 9 5"><path d="M0 0h9L4.5 5z" fill="#FFFFFF"/></svg>
<svg class="a" style="left:390px;top:114px;" width="10" height="13" viewBox="0 0 10 13"><path d="M2 1h6M3 1v7M7 1v7M1 8h8M5 8v5" stroke="#FFFFFF" stroke-width="1.3" fill="none"/></svg>
<svg class="a" style="left:406px;top:115px;" width="11" height="11" viewBox="0 0 11 11"><path d="M1 1L10 10M10 1L1 10" stroke="#FFFFFF" stroke-width="1.4"/></svg>
<div class="a" style="left:7px;top:131px;width:416px;height:29px;background:#CFD6E5;"></div>
<svg class="a" style="left:15px;top:138px;" width="14" height="14" viewBox="0 0 14 14"><circle cx="7" cy="7" r="6.5" fill="#BFC2C8"/><path d="M3 7h8M3 7l3-3M3 7l3 3" stroke="#F0F0F0" stroke-width="1.6" fill="none"/></svg>
<svg class="a" style="left:37px;top:138px;" width="14" height="14" viewBox="0 0 14 14"><circle cx="7" cy="7" r="6.5" fill="#BFC2C8"/><path d="M3 7h8M11 7l-3-3M11 7l-3 3" stroke="#F0F0F0" stroke-width="1.6" fill="none"/></svg>
<svg class="a" style="left:58px;top:137px;" width="16" height="16" viewBox="0 0 16 16"><path d="M1 8L8 1l7 7M3 6v9h4v-5h2v5h4V6" fill="none" stroke="#424242" stroke-width="1.5"/></svg>
<svg class="a" style="left:82px;top:137px;" width="16" height="16" viewBox="0 0 16 16"><rect x="1" y="7" width="8" height="7" fill="#DADBE0" stroke="#424242" stroke-width="1.3"/><path d="M7 2h3l1 1h4v8H9V6H7z" fill="#DCA65A"/><path d="M2 5V3h3M4 1.5l1.5 1.5L4 4.5" stroke="#1B6AC9" stroke-width="1.2" fill="none"/><path d="M14 12v2h-3M12 12.5l-1.5 1.5 1.5 1.5" stroke="#1B6AC9" stroke-width="1.2" fill="none"/></svg>
<svg class="a" style="left:102px;top:143px;" width="7" height="4" viewBox="0 0 7 4"><path d="M0 0h7L3.5 4z" fill="#424242"/></svg>
<div class="a" style="left:118px;top:138px;width:1px;height:16px;background:#A5AEC0;"></div>
<svg class="a" style="left:126px;top:137px;" width="16" height="16" viewBox="0 0 16 16"><circle cx="9" cy="10" r="5" fill="none" stroke="#424242" stroke-width="1.3"/><path d="M9 7v3h2M1 1h4M3 1v5" stroke="#424242" stroke-width="1.2" fill="none"/></svg>
<svg class="a" style="left:145px;top:143px;" width="7" height="4" viewBox="0 0 7 4"><path d="M0 0h7L3.5 4z" fill="#424242"/></svg>
<svg class="a" style="left:159px;top:138px;" width="14" height="14" viewBox="0 0 14 14"><rect x="1" y="5.5" width="7" height="6" fill="none" stroke="#424242" stroke-width="1.3"/><path d="M3 7.5h3" stroke="#1B6AC9" stroke-width="1.3"/><path d="M3.5 3.5h7v6M6 1h7v6" fill="none" stroke="#424242" stroke-width="1.2"/></svg>
<div class="a" style="left:179px;top:138px;width:1px;height:16px;background:#A5AEC0;"></div>
<svg class="a" style="left:188px;top:137px;" width="16" height="16" viewBox="0 0 16 16"><path d="M1.5 14.5L8 8" stroke="#1E1E1E" stroke-width="2.6" stroke-linecap="round"/><path d="M7 9A4.5 4.5 0 0 1 12.5 2.2L10.3 4.4l.8 1.8 1.8.8 2.2-2.2A4.5 4.5 0 0 1 8.6 10.3z" fill="#1E1E1E"/></svg>
<div class="a" style="left:207px;top:134px;width:22px;height:23px;background:#FCFCF4;border:1px solid #3D4F72;"></div>
<div class="a" style="left:211px;top:144px;width:14px;height:4px;background:#1E1E1E;"></div>
<div class="a" style="left:211px;top:144px;width:6px;height:2px;background:#FCFCF4;"></div>
<div class="a" style="left:7px;top:160px;width:416px;height:20px;background:#FCFCFC;border:1px solid #CCCEDB;"></div>
<div class="t" style="left:11px;top:162.0px;line-height:16px;font-size:11.7px;color:#6D6D6D;">Search Solution Explorer (Ctrl+;)</div>
<svg class="a" style="left:395px;top:163px;" width="14" height="14" viewBox="0 0 14 14"><circle cx="9" cy="5" r="3.8" fill="none" stroke="#555" stroke-width="1.6"/><path d="M6.5 7.5L1.5 12.5" stroke="#555" stroke-width="2.2"/></svg>
<svg class="a" style="left:412px;top:168px;" width="7" height="4" viewBox="0 0 7 4"><path d="M0 0h7L3.5 4z" fill="#555"/></svg>
<div class="a" style="left:7px;top:181px;width:399px;height:809px;overflow:hidden;background:#fff">
<svg class="a" style="left:48px;top:5px;" width="16" height="16" viewBox="0 0 16 16"><defs><linearGradient id="mg" x1="0" y1="0" x2="0" y2="1"><stop offset="0" stop-color="#F2F2F2"/><stop offset="1" stop-color="#B8B8B8"/></linearGradient></defs><rect x="0.5" y="0.5" width="15" height="15" fill="url(#mg)" stroke="#7A7A7A"/><path d="M2 11V9l1.5-.5.5-1.5 1.5.3 1-1.3 1.5.8 1.5-.8 1 1.3 1.5-.3.5 1.5 1.5.5V11z" fill="none" stroke="#555" stroke-width="0.8"/><rect x="6.5" y="10" width="3" height="1.5" fill="none" stroke="#555" stroke-width="0.7"/><path d="M1 12.5h14" stroke="#888"/></svg>
<div class="t" style="left:69px;top:4.5px;line-height:16px;font-size:11.6px;color:#000000;">MOTION</div>
<svg class="a" style="left:48px;top:23px;" width="16" height="16" viewBox="0 0 16 16"><rect x="0.5" y="0.5" width="15" height="15" fill="#EE8A3A" stroke="#C05A10"/><rect x="3" y="2.5" width="4" height="7" fill="#FCE0C0" stroke="#B85010" stroke-width="0.8"/><rect x="8.5" y="2.5" width="4.5" height="11" fill="#F6B070" stroke="#B85010" stroke-width="0.8"/><path d="M1.5 4h1M1.5 7h1M13.5 4h1M13.5 7h1M13.5 10h1" stroke="#FCE0C0"/><rect x="1.5" y="11" width="6" height="2.5" fill="#F6B070"/></svg>
<div class="t" style="left:69px;top:22.5px;line-height:16px;font-size:11.6px;color:#000000;">PLC</div>
<svg class="a" style="left:28px;top:44px;" width="8" height="8" viewBox="0 0 8 8"><path d="M7 1L7 7L1 7z" fill="#1E1E1E"/></svg>
<svg class="a" style="left:48px;top:41px;" width="16" height="16" viewBox="0 0 16 16"><rect x="0.5" y="0.5" width="15" height="15" fill="#FFD21F" stroke="#E0A000"/><polygon points="13.50,8.00 13.39,9.07 11.88,9.61 11.49,10.33 11.89,11.89 11.06,12.57 9.61,11.88 8.82,12.12 8.00,13.50 6.93,13.39 6.39,11.88 5.67,11.49 4.11,11.89 3.43,11.06 4.12,9.61 3.88,8.82 2.50,8.00 2.61,6.93 4.12,6.39 4.51,5.67 4.11,4.11 4.94,3.43 6.39,4.12 7.18,3.88 8.00,2.50 9.07,2.61 9.61,4.12 10.33,4.51 11.89,4.11 12.57,4.94 11.88,6.39 12.12,7.18" fill="none" stroke="#D08A00" stroke-width="0.9"/><path d="M8 3.5v9M6 6.5l2 1.5-2 2" fill="none" stroke="#D08A00" stroke-width="0.8"/></svg>
<div class="t" style="left:69px;top:40.5px;line-height:16px;font-size:11.6px;color:#000000;">SAFETY</div>
<svg class="a" style="left:46px;top:62px;" width="8" height="8" viewBox="0 0 8 8"><path d="M7 1L7 7L1 7z" fill="#1E1E1E"/></svg>
<svg class="a" style="left:66px;top:59px;" width="16" height="16" viewBox="0 0 16 16"><rect x="0.5" y="0.5" width="15" height="15" fill="#FFE680" stroke="#E0A000"/><polygon points="13.50,8.00 13.39,9.07 11.88,9.61 11.49,10.33 11.89,11.89 11.06,12.57 9.61,11.88 8.82,12.12 8.00,13.50 6.93,13.39 6.39,11.88 5.67,11.49 4.11,11.89 3.43,11.06 4.12,9.61 3.88,8.82 2.50,8.00 2.61,6.93 4.12,6.39 4.51,5.67 4.11,4.11 4.94,3.43 6.39,4.12 7.18,3.88 8.00,2.50 9.07,2.61 9.61,4.12 10.33,4.51 11.89,4.11 12.57,4.94 11.88,6.39 12.12,7.18" fill="none" stroke="#D08A00" stroke-width="0.9"/><path d="M8 3.5v9M6 6.5l2 1.5-2 2" fill="none" stroke="#D08A00" stroke-width="0.8"/></svg>
<div class="t" style="left:87px;top:58.5px;line-height:16px;font-size:11.6px;color:#000000;">TwinSAFE_pretest</div>
<svg class="a" style="left:65px;top:79px;" width="8" height="11" viewBox="0 0 8 11"><path d="M1.5 0.5L6 5L1.5 9.5z" fill="none" stroke="#1E1E1E" stroke-width="1"/></svg>
<svg class="a" style="left:84px;top:77px;" width="16" height="16" viewBox="0 0 16 16"><rect x="0.5" y="0.5" width="15" height="15" fill="#FFF8D8" stroke="#E0A000"/><polygon points="13.60,8.00 13.49,9.09 11.97,9.65 11.58,10.39 11.96,11.96 11.11,12.66 9.65,11.97 8.84,12.22 8.00,13.60 6.91,13.49 6.35,11.97 5.61,11.58 4.04,11.96 3.34,11.11 4.03,9.65 3.78,8.84 2.40,8.00 2.51,6.91 4.03,6.35 4.42,5.61 4.04,4.04 4.89,3.34 6.35,4.03 7.16,3.78 8.00,2.40 9.09,2.51 9.65,4.03 10.39,4.42 11.96,4.04 12.66,4.89 11.97,6.35 12.22,7.16" fill="#F5C000" stroke="#E8A800" stroke-width="0.9"/><path d="M8 4v8M6.5 6.5l1.5 1.5-1.5 1.5" fill="none" stroke="#FFF2A0" stroke-width="0.9"/></svg>
<div class="t" style="left:105px;top:76.5px;line-height:16px;font-size:11.6px;color:#000000;">TwinSAFE_pretest Project</div>
<svg class="a" style="left:84px;top:95px;" width="16" height="16" viewBox="0 0 16 16"><rect x="0.5" y="0.5" width="15" height="15" fill="#F4F4F8" stroke="#3A4A6A"/><path d="M3.5 3h9v3.5h-2.5v3.5h2.5V13h-9V10h2.5V6.5H3.5z" fill="#D84A5A" stroke="#B02A3A" stroke-width="0.6"/></svg>
<div class="t" style="left:105px;top:94.5px;line-height:16px;font-size:11.6px;color:#000000;">TwinSAFE_pretest Instance</div>
<svg class="a" style="left:48px;top:113px;" width="16" height="16" viewBox="0 0 16 16"><rect x="0.5" y="0.5" width="15" height="15" fill="#8CBF5C" stroke="#3A7A2A"/><path d="M6 2.5a2 2 0 1 0 0 4M9 7.5a2.5 2.5 0 1 0 0 5" fill="none" stroke="#1E5A1E" stroke-width="1"/><path d="M11 10h3M12.5 8.5v3M14 10h1.5" stroke="#1E5A1E" stroke-width="0.9"/></svg>
<div class="t" style="left:69px;top:112.5px;line-height:16px;font-size:11.6px;color:#000000;">C++</div>
<svg class="a" style="left:48px;top:131px;" width="16" height="16" viewBox="0 0 16 16"><rect x="0.5" y="0.5" width="15" height="15" fill="#6080C8" stroke="#30509A"/><circle cx="8" cy="8" r="4" fill="none" stroke="#1A2A60" stroke-width="1"/><path d="M2.5 13.5L13.5 2.5M4 9l2.5-2.5 2 2 3-3" fill="none" stroke="#1A2A60" stroke-width="0.9"/></svg>
<div class="t" style="left:69px;top:130.5px;line-height:16px;font-size:11.6px;color:#000000;">ANALYTICS</div>
<svg class="a" style="left:28px;top:152px;" width="8" height="8" viewBox="0 0 8 8"><path d="M7 1L7 7L1 7z" fill="#1E1E1E"/></svg>
<svg class="a" style="left:48px;top:149px;" width="16" height="16" viewBox="0 0 16 16"><rect x="0.5" y="0.5" width="15" height="15" fill="#E3B53A" stroke="#B08018"/><rect x="2.5" y="2.5" width="11" height="3" fill="#F0D070" stroke="#8A6008" stroke-width="0.9"/><path d="M11 5.5L6 10.5" stroke="#8A6008" stroke-width="1.1"/><rect x="3.5" y="10.5" width="7" height="3" fill="#F0D070" stroke="#8A6008" stroke-width="0.9"/></svg>
<div class="t" style="left:69px;top:148.5px;line-height:16px;font-size:11.6px;color:#000000;">I/O</div>
<svg class="a" style="left:46px;top:170px;" width="8" height="8" viewBox="0 0 8 8"><path d="M7 1L7 7L1 7z" fill="#1E1E1E"/></svg>
<svg class="a" style="left:66px;top:167px;" width="16" height="16" viewBox="0 0 16 16"><path d="M3 0.5v6M0 3.5h6" stroke="#3BAA3B" stroke-width="2"/><rect x="6.5" y="1.5" width="5" height="3.5" fill="#D8D8D8" stroke="#7A7A7A"/><path d="M8.5 5v9.5M8.5 10.5h2.5M8.5 13.5h2.5" fill="none" stroke="#7A7A7A"/><rect x="11" y="9" width="4" height="3" fill="#D8D8D8" stroke="#7A7A7A" stroke-width="0.8"/><rect x="11" y="12.5" width="4" height="3" fill="#D8D8D8" stroke="#7A7A7A" stroke-width="0.8"/></svg>
<div class="t" style="left:87px;top:166.5px;line-height:16px;font-size:11.6px;color:#000000;">Devices</div>
<svg class="a" style="left:64px;top:188px;" width="8" height="8" viewBox="0 0 8 8"><path d="M7 1L7 7L1 7z" fill="#1E1E1E"/></svg>
<svg class="a" style="left:84px;top:185px;" width="16" height="16" viewBox="0 0 16 16"><rect x="0" y="2" width="16" height="12" fill="#BDBDBD"/><rect x="1" y="4" width="11" height="2" fill="#E81010"/><path d="M11 2.5l4 2.5-4 2.5z" fill="#E81010"/><rect x="4" y="9" width="11" height="2" fill="#101010"/><path d="M5 7.5L1 10l4 2.5z" fill="#101010"/></svg>
<div class="t" style="left:105px;top:184.5px;line-height:16px;font-size:11.6px;color:#000000;">Device 1 (EtherCAT)</div>
<svg class="a" style="left:102px;top:203px;" width="16" height="16" viewBox="0 0 16 16"><rect x="9" y="1" width="6" height="6" fill="#D84050" stroke="#902030" stroke-width="0.8"/><rect x="1" y="9" width="6" height="6" fill="#F0D040" stroke="#B09020" stroke-width="0.8"/><path d="M4 7V2M2 4l2-2 2 2" stroke="#E03020" stroke-width="1.5" fill="none"/><path d="M12 9v5M10 12l2 2 2-2" stroke="#E0A020" stroke-width="1.5" fill="none"/></svg>
<div class="t" style="left:123px;top:202.5px;line-height:16px;font-size:11.6px;color:#000000;">Image</div>
<svg class="a" style="left:102px;top:221px;" width="16" height="16" viewBox="0 0 16 16"><rect x="9" y="1" width="6" height="6" fill="#D84050" stroke="#902030" stroke-width="0.8"/><rect x="1" y="9" width="6" height="6" fill="#F0D040" stroke="#B09020" stroke-width="0.8"/><path d="M4 7V2M2 4l2-2 2 2" stroke="#E03020" stroke-width="1.5" fill="none"/><path d="M12 9v5M10 12l2 2 2-2" stroke="#E0A020" stroke-width="1.5" fill="none"/></svg>
<div class="t" style="left:123px;top:220.5px;line-height:16px;font-size:11.6px;color:#000000;">Image-Info</div>
<svg class="a" style="left:83px;top:241px;" width="8" height="11" viewBox="0 0 8 11"><path d="M1.5 0.5L6 5L1.5 9.5z" fill="none" stroke="#1E1E1E" stroke-width="1"/></svg>
<svg class="a" style="left:102px;top:239px;" width="16" height="16" viewBox="0 0 16 16"><path d="M3 7a5 5 0 0 1 9-3" fill="none" stroke="#2E5AB8" stroke-width="2.2"/><path d="M13 9a5 5 0 0 1-9 3" fill="none" stroke="#7A9AE0" stroke-width="2.2"/><path d="M10 1l4 2-3 3z" fill="#2E5AB8"/></svg>
<div class="t" style="left:123px;top:238.5px;line-height:16px;font-size:11.6px;color:#000000;">SyncUnits</div>
<svg class="a" style="left:83px;top:259px;" width="8" height="11" viewBox="0 0 8 11"><path d="M1.5 0.5L6 5L1.5 9.5z" fill="none" stroke="#1E1E1E" stroke-width="1"/></svg>
<svg class="a" style="left:102px;top:257px;" width="16" height="16" viewBox="0 0 16 16"><defs><linearGradient id="gF8E020" x1="0" y1="0" x2="1" y2="1"><stop offset="0" stop-color="#F4FF70"/><stop offset="1" stop-color="#F8E020"/></linearGradient></defs><rect x="1.5" y="2.5" width="10" height="8" fill="url(#gF8E020)" stroke="#D0A800"/><rect x="4.5" y="5.5" width="10" height="8" fill="url(#gF8E020)" stroke="#D0A800"/></svg>
<div class="t" style="left:123px;top:256.5px;line-height:16px;font-size:11.6px;color:#000000;">Inputs</div>
<svg class="a" style="left:83px;top:277px;" width="8" height="11" viewBox="0 0 8 11"><path d="M1.5 0.5L6 5L1.5 9.5z" fill="none" stroke="#1E1E1E" stroke-width="1"/></svg>
<svg class="a" style="left:102px;top:275px;" width="16" height="16" viewBox="0 0 16 16"><defs><linearGradient id="gC81818" x1="0" y1="0" x2="1" y2="1"><stop offset="0" stop-color="#F07070"/><stop offset="1" stop-color="#C81818"/></linearGradient></defs><rect x="1.5" y="2.5" width="10" height="8" fill="url(#gC81818)" stroke="#8A0A0A"/><rect x="4.5" y="5.5" width="10" height="8" fill="url(#gC81818)" stroke="#8A0A0A"/></svg>
<div class="t" style="left:123px;top:274.5px;line-height:16px;font-size:11.6px;color:#000000;">Outputs</div>
<svg class="a" style="left:83px;top:295px;" width="8" height="11" viewBox="0 0 8 11"><path d="M1.5 0.5L6 5L1.5 9.5z" fill="none" stroke="#1E1E1E" stroke-width="1"/></svg>
<svg class="a" style="left:102px;top:293px;" width="16" height="16" viewBox="0 0 16 16"><defs><linearGradient id="g20B020" x1="0" y1="0" x2="1" y2="1"><stop offset="0" stop-color="#80F080"/><stop offset="1" stop-color="#20B020"/></linearGradient></defs><rect x="1.5" y="2.5" width="10" height="8" fill="url(#g20B020)" stroke="#0A700A"/><rect x="4.5" y="5.5" width="10" height="8" fill="url(#g20B020)" stroke="#0A700A"/></svg>
<div class="t" style="left:123px;top:292.5px;line-height:16px;font-size:11.6px;color:#000000;">InfoData</div>
<svg class="a" style="left:82px;top:314px;" width="8" height="8" viewBox="0 0 8 8"><path d="M7 1L7 7L1 7z" fill="#1E1E1E"/></svg>
<svg class="a" style="left:102px;top:311px;" width="16" height="16" viewBox="0 0 16 16"><rect x="5" y="0" width="2" height="16" fill="#D81818"/><rect x="7" y="0" width="6" height="16" fill="#E8E8E8" stroke="#7A7A7A" stroke-width="0.6"/><rect x="8.5" y="2" width="1.5" height="1.5" fill="#2040C0"/><rect x="10.5" y="4" width="1.5" height="1.5" fill="#D02020"/><rect x="8.5" y="6" width="1.5" height="1.5" fill="#E0C000"/><rect x="10.5" y="8" width="1.5" height="1.5" fill="#2040C0"/><rect x="8.5" y="10" width="1.5" height="1.5" fill="#D02020"/><rect x="10.5" y="12" width="1.5" height="1.5" fill="#E0C000"/></svg>
<div class="t" style="left:123px;top:310.5px;line-height:16px;font-size:11.6px;color:#000000;">Term 1 (EK1200)</div>
<svg class="a" style="left:100px;top:332px;" width="8" height="8" viewBox="0 0 8 8"><path d="M7 1L7 7L1 7z" fill="#1E1E1E"/></svg>
<svg class="a" style="left:120px;top:329px;" width="16" height="16" viewBox="0 0 16 16"><rect x="0" y="0" width="6" height="6" fill="#7A1A9A"/><rect x="6" y="1" width="5" height="14" fill="#F8E820" stroke="#666" stroke-width="0.6"/><path d="M7.8 2v12M9.6 2v12" stroke="#222" stroke-width="0.9" stroke-dasharray="1 1"/></svg>
<div class="t" style="left:141px;top:328.5px;line-height:16px;font-size:11.6px;color:#000000;">Term 2 (EL6910)</div>
<svg class="a" style="left:119px;top:349px;" width="8" height="11" viewBox="0 0 8 11"><path d="M1.5 0.5L6 5L1.5 9.5z" fill="none" stroke="#1E1E1E" stroke-width="1"/></svg>
<svg class="a" style="left:138px;top:347px;" width="16" height="16" viewBox="0 0 16 16"><defs><linearGradient id="gF8E020" x1="0" y1="0" x2="1" y2="1"><stop offset="0" stop-color="#F4FF70"/><stop offset="1" stop-color="#F8E020"/></linearGradient></defs><rect x="1.5" y="2.5" width="10" height="8" fill="url(#gF8E020)" stroke="#D0A800"/><rect x="4.5" y="5.5" width="10" height="8" fill="url(#gF8E020)" stroke="#D0A800"/></svg>
<div class="t" style="left:159px;top:346.5px;line-height:16px;font-size:11.6px;color:#000000;">ConnectionInputs</div>
<svg class="a" style="left:119px;top:367px;" width="8" height="11" viewBox="0 0 8 11"><path d="M1.5 0.5L6 5L1.5 9.5z" fill="none" stroke="#1E1E1E" stroke-width="1"/></svg>
<svg class="a" style="left:138px;top:365px;" width="16" height="16" viewBox="0 0 16 16"><defs><linearGradient id="gC81818" x1="0" y1="0" x2="1" y2="1"><stop offset="0" stop-color="#F07070"/><stop offset="1" stop-color="#C81818"/></linearGradient></defs><rect x="1.5" y="2.5" width="10" height="8" fill="url(#gC81818)" stroke="#8A0A0A"/><rect x="4.5" y="5.5" width="10" height="8" fill="url(#gC81818)" stroke="#8A0A0A"/></svg>
<div class="t" style="left:159px;top:364.5px;line-height:16px;font-size:11.6px;color:#000000;">ConnectionOutputs</div>
<svg class="a" style="left:119px;top:385px;" width="8" height="11" viewBox="0 0 8 11"><path d="M1.5 0.5L6 5L1.5 9.5z" fill="none" stroke="#1E1E1E" stroke-width="1"/></svg>
<svg class="a" style="left:138px;top:383px;" width="16" height="16" viewBox="0 0 16 16"><defs><linearGradient id="gC81818" x1="0" y1="0" x2="1" y2="1"><stop offset="0" stop-color="#F07070"/><stop offset="1" stop-color="#C81818"/></linearGradient></defs><rect x="1.5" y="2.5" width="10" height="8" fill="url(#gC81818)" stroke="#8A0A0A"/><rect x="4.5" y="5.5" width="10" height="8" fill="url(#gC81818)" stroke="#8A0A0A"/></svg>
<div class="t" style="left:159px;top:382.5px;line-height:16px;font-size:11.6px;color:#000000;">StandardOutputs</div>
<svg class="a" style="left:119px;top:403px;" width="8" height="11" viewBox="0 0 8 11"><path d="M1.5 0.5L6 5L1.5 9.5z" fill="none" stroke="#1E1E1E" stroke-width="1"/></svg>
<svg class="a" style="left:138px;top:401px;" width="16" height="16" viewBox="0 0 16 16"><defs><linearGradient id="gF8E020" x1="0" y1="0" x2="1" y2="1"><stop offset="0" stop-color="#F4FF70"/><stop offset="1" stop-color="#F8E020"/></linearGradient></defs><rect x="1.5" y="2.5" width="10" height="8" fill="url(#gF8E020)" stroke="#D0A800"/><rect x="4.5" y="5.5" width="10" height="8" fill="url(#gF8E020)" stroke="#D0A800"/></svg>
<div class="t" style="left:159px;top:400.5px;line-height:16px;font-size:11.6px;color:#000000;">Device Info Data</div>
<svg class="a" style="left:119px;top:421px;" width="8" height="11" viewBox="0 0 8 11"><path d="M1.5 0.5L6 5L1.5 9.5z" fill="none" stroke="#1E1E1E" stroke-width="1"/></svg>
<svg class="a" style="left:138px;top:419px;" width="16" height="16" viewBox="0 0 16 16"><defs><linearGradient id="gF8E020" x1="0" y1="0" x2="1" y2="1"><stop offset="0" stop-color="#F4FF70"/><stop offset="1" stop-color="#F8E020"/></linearGradient></defs><rect x="1.5" y="2.5" width="10" height="8" fill="url(#gF8E020)" stroke="#D0A800"/><rect x="4.5" y="5.5" width="10" height="8" fill="url(#gF8E020)" stroke="#D0A800"/></svg>
<div class="t" style="left:159px;top:418.5px;line-height:16px;font-size:11.6px;color:#000000;">FSLOGIC Inputs</div>
<svg class="a" style="left:138px;top:437px;" width="16" height="16" viewBox="0 0 16 16"><defs><linearGradient id="gC81818" x1="0" y1="0" x2="1" y2="1"><stop offset="0" stop-color="#F07070"/><stop offset="1" stop-color="#C81818"/></linearGradient></defs><rect x="1.5" y="2.5" width="10" height="8" fill="url(#gC81818)" stroke="#8A0A0A"/><rect x="4.5" y="5.5" width="10" height="8" fill="url(#gC81818)" stroke="#8A0A0A"/></svg>
<div class="t" style="left:159px;top:436.5px;line-height:16px;font-size:11.6px;color:#000000;">FSLOGIC Outputs</div>
<svg class="a" style="left:119px;top:457px;" width="8" height="11" viewBox="0 0 8 11"><path d="M1.5 0.5L6 5L1.5 9.5z" fill="none" stroke="#1E1E1E" stroke-width="1"/></svg>
<svg class="a" style="left:138px;top:455px;" width="16" height="16" viewBox="0 0 16 16"><defs><linearGradient id="g20B020" x1="0" y1="0" x2="1" y2="1"><stop offset="0" stop-color="#80F080"/><stop offset="1" stop-color="#20B020"/></linearGradient></defs><rect x="1.5" y="2.5" width="10" height="8" fill="url(#g20B020)" stroke="#0A700A"/><rect x="4.5" y="5.5" width="10" height="8" fill="url(#g20B020)" stroke="#0A700A"/></svg>
<div class="t" style="left:159px;top:454.5px;line-height:16px;font-size:11.6px;color:#000000;">WcState</div>
<svg class="a" style="left:119px;top:475px;" width="8" height="11" viewBox="0 0 8 11"><path d="M1.5 0.5L6 5L1.5 9.5z" fill="none" stroke="#1E1E1E" stroke-width="1"/></svg>
<svg class="a" style="left:138px;top:473px;" width="16" height="16" viewBox="0 0 16 16"><defs><linearGradient id="g20B020" x1="0" y1="0" x2="1" y2="1"><stop offset="0" stop-color="#80F080"/><stop offset="1" stop-color="#20B020"/></linearGradient></defs><rect x="1.5" y="2.5" width="10" height="8" fill="url(#g20B020)" stroke="#0A700A"/><rect x="4.5" y="5.5" width="10" height="8" fill="url(#g20B020)" stroke="#0A700A"/></svg>
<div class="t" style="left:159px;top:472.5px;line-height:16px;font-size:11.6px;color:#000000;">InfoData</div>
<svg class="a" style="left:100px;top:494px;" width="8" height="8" viewBox="0 0 8 8"><path d="M7 1L7 7L1 7z" fill="#1E1E1E"/></svg>
<svg class="a" style="left:120px;top:491px;" width="16" height="16" viewBox="0 0 16 16"><rect x="0" y="0" width="6" height="6" fill="#7A1A9A"/><rect x="6" y="1" width="5" height="14" fill="#F8E820" stroke="#666" stroke-width="0.6"/><path d="M7.8 2v12M9.6 2v12" stroke="#222" stroke-width="0.9" stroke-dasharray="1 1"/></svg>
<div class="t" style="left:141px;top:490.5px;line-height:16px;font-size:11.6px;color:#000000;">Term 3 (EL1918)</div>
<svg class="a" style="left:119px;top:511px;" width="8" height="11" viewBox="0 0 8 11"><path d="M1.5 0.5L6 5L1.5 9.5z" fill="none" stroke="#1E1E1E" stroke-width="1"/></svg>
<svg class="a" style="left:138px;top:509px;" width="16" height="16" viewBox="0 0 16 16"><rect x="0" y="0" width="6" height="6" fill="#7A1A9A"/><rect x="6" y="1" width="5" height="14" fill="#F8E820" stroke="#666" stroke-width="0.6"/><path d="M7.8 2v12M9.6 2v12" stroke="#222" stroke-width="0.9" stroke-dasharray="1 1"/></svg>
<div class="t" style="left:159px;top:508.5px;line-height:16px;font-size:11.6px;color:#000000;">Module 1 (FSOE)</div>
<svg class="a" style="left:119px;top:529px;" width="8" height="11" viewBox="0 0 8 11"><path d="M1.5 0.5L6 5L1.5 9.5z" fill="none" stroke="#1E1E1E" stroke-width="1"/></svg>
<svg class="a" style="left:138px;top:527px;" width="16" height="16" viewBox="0 0 16 16"><rect x="0" y="0" width="6" height="6" fill="#7A1A9A"/><rect x="6" y="1" width="5" height="14" fill="#F8E820" stroke="#666" stroke-width="0.6"/><path d="M7.8 2v12M9.6 2v12" stroke="#222" stroke-width="0.9" stroke-dasharray="1 1"/></svg>
<div class="t" style="left:159px;top:526.5px;line-height:16px;font-size:11.6px;color:#000000;">Module 2 (FSLOGIC)</div>
<svg class="a" style="left:119px;top:547px;" width="8" height="11" viewBox="0 0 8 11"><path d="M1.5 0.5L6 5L1.5 9.5z" fill="none" stroke="#1E1E1E" stroke-width="1"/></svg>
<svg class="a" style="left:138px;top:545px;" width="16" height="16" viewBox="0 0 16 16"><defs><linearGradient id="g20B020" x1="0" y1="0" x2="1" y2="1"><stop offset="0" stop-color="#80F080"/><stop offset="1" stop-color="#20B020"/></linearGradient></defs><rect x="1.5" y="2.5" width="10" height="8" fill="url(#g20B020)" stroke="#0A700A"/><rect x="4.5" y="5.5" width="10" height="8" fill="url(#g20B020)" stroke="#0A700A"/></svg>
<div class="t" style="left:159px;top:544.5px;line-height:16px;font-size:11.6px;color:#000000;">WcState</div>
<svg class="a" style="left:118px;top:566px;" width="8" height="8" viewBox="0 0 8 8"><path d="M7 1L7 7L1 7z" fill="#1E1E1E"/></svg>
<svg class="a" style="left:138px;top:563px;" width="16" height="16" viewBox="0 0 16 16"><defs><linearGradient id="g20B020" x1="0" y1="0" x2="1" y2="1"><stop offset="0" stop-color="#80F080"/><stop offset="1" stop-color="#20B020"/></linearGradient></defs><rect x="1.5" y="2.5" width="10" height="8" fill="url(#g20B020)" stroke="#0A700A"/><rect x="4.5" y="5.5" width="10" height="8" fill="url(#g20B020)" stroke="#0A700A"/></svg>
<div class="t" style="left:159px;top:562.5px;line-height:16px;font-size:11.6px;color:#000000;">InfoData</div>
<svg class="a" style="left:156px;top:581px;" width="16" height="16" viewBox="0 0 16 16"><rect x="4" y="3" width="10" height="9" fill="#F8D820" stroke="#C8A000"/><path d="M1 6h7M5 3l3 3-3 3" stroke="#E02818" stroke-width="2" fill="none"/></svg>
<div class="t" style="left:177px;top:580.5px;line-height:16px;font-size:11.6px;color:#000000;">State</div>
<svg class="a" style="left:137px;top:601px;" width="8" height="11" viewBox="0 0 8 11"><path d="M1.5 0.5L6 5L1.5 9.5z" fill="none" stroke="#1E1E1E" stroke-width="1"/></svg>
<svg class="a" style="left:156px;top:599px;" width="16" height="16" viewBox="0 0 16 16"><rect x="4" y="3" width="10" height="9" fill="#F8D820" stroke="#C8A000"/><path d="M1 6h7M5 3l3 3-3 3" stroke="#E02818" stroke-width="2" fill="none"/><text x="0" y="16" font-size="6" fill="#444" font-family="Liberation Sans">s</text></svg>
<div class="t" style="left:177px;top:598.5px;line-height:16px;font-size:11.6px;color:#000000;">AdsAddr</div>
<div class="a" style="left:0px;top:615px;width:399px;height:18px;background:#CCCEDB;"></div>
<svg class="a" style="left:100px;top:620px;" width="8" height="8" viewBox="0 0 8 8"><path d="M7 1L7 7L1 7z" fill="#1E1E1E"/></svg>
<svg class="a" style="left:120px;top:617px;" width="16" height="16" viewBox="0 0 16 16"><rect x="0" y="0" width="6" height="6" fill="#10E010"/><rect x="6" y="1" width="5" height="14" fill="#F8E820" stroke="#666" stroke-width="0.6"/><path d="M7.8 2v12M9.6 2v12" stroke="#222" stroke-width="0.9" stroke-dasharray="1 1"/></svg>
<div class="t" style="left:141px;top:616.5px;line-height:16px;font-size:11.6px;color:#000000;">Term 4 (EL3174-0090)</div>
<svg class="a" style="left:119px;top:637px;" width="8" height="11" viewBox="0 0 8 11"><path d="M1.5 0.5L6 5L1.5 9.5z" fill="none" stroke="#1E1E1E" stroke-width="1"/></svg>
<svg class="a" style="left:138px;top:635px;" width="16" height="16" viewBox="0 0 16 16"><defs><linearGradient id="gF8E020" x1="0" y1="0" x2="1" y2="1"><stop offset="0" stop-color="#F4FF70"/><stop offset="1" stop-color="#F8E020"/></linearGradient></defs><rect x="1.5" y="2.5" width="10" height="8" fill="url(#gF8E020)" stroke="#D0A800"/><rect x="4.5" y="5.5" width="10" height="8" fill="url(#gF8E020)" stroke="#D0A800"/></svg>
<div class="t" style="left:159px;top:634.5px;line-height:16px;font-size:11.6px;color:#000000;">AI Standard Channel 1</div>
<svg class="a" style="left:119px;top:655px;" width="8" height="11" viewBox="0 0 8 11"><path d="M1.5 0.5L6 5L1.5 9.5z" fill="none" stroke="#1E1E1E" stroke-width="1"/></svg>
<svg class="a" style="left:138px;top:653px;" width="16" height="16" viewBox="0 0 16 16"><defs><linearGradient id="gF8E020" x1="0" y1="0" x2="1" y2="1"><stop offset="0" stop-color="#F4FF70"/><stop offset="1" stop-color="#F8E020"/></linearGradient></defs><rect x="1.5" y="2.5" width="10" height="8" fill="url(#gF8E020)" stroke="#D0A800"/><rect x="4.5" y="5.5" width="10" height="8" fill="url(#gF8E020)" stroke="#D0A800"/></svg>
<div class="t" style="left:159px;top:652.5px;line-height:16px;font-size:11.6px;color:#000000;">AI Standard Channel 2</div>
<svg class="a" style="left:119px;top:673px;" width="8" height="11" viewBox="0 0 8 11"><path d="M1.5 0.5L6 5L1.5 9.5z" fill="none" stroke="#1E1E1E" stroke-width="1"/></svg>
<svg class="a" style="left:138px;top:671px;" width="16" height="16" viewBox="0 0 16 16"><defs><linearGradient id="gF8E020" x1="0" y1="0" x2="1" y2="1"><stop offset="0" stop-color="#F4FF70"/><stop offset="1" stop-color="#F8E020"/></linearGradient></defs><rect x="1.5" y="2.5" width="10" height="8" fill="url(#gF8E020)" stroke="#D0A800"/><rect x="4.5" y="5.5" width="10" height="8" fill="url(#gF8E020)" stroke="#D0A800"/></svg>
<div class="t" style="left:159px;top:670.5px;line-height:16px;font-size:11.6px;color:#000000;">AI Standard Channel 3</div>
<svg class="a" style="left:119px;top:691px;" width="8" height="11" viewBox="0 0 8 11"><path d="M1.5 0.5L6 5L1.5 9.5z" fill="none" stroke="#1E1E1E" stroke-width="1"/></svg>
<svg class="a" style="left:138px;top:689px;" width="16" height="16" viewBox="0 0 16 16"><defs><linearGradient id="gF8E020" x1="0" y1="0" x2="1" y2="1"><stop offset="0" stop-color="#F4FF70"/><stop offset="1" stop-color="#F8E020"/></linearGradient></defs><rect x="1.5" y="2.5" width="10" height="8" fill="url(#gF8E020)" stroke="#D0A800"/><rect x="4.5" y="5.5" width="10" height="8" fill="url(#gF8E020)" stroke="#D0A800"/></svg>
<div class="t" style="left:159px;top:688.5px;line-height:16px;font-size:11.6px;color:#000000;">AI Standard Channel 4</div>
<svg class="a" style="left:118px;top:710px;" width="8" height="8" viewBox="0 0 8 8"><path d="M7 1L7 7L1 7z" fill="#1E1E1E"/></svg>
<svg class="a" style="left:138px;top:707px;" width="16" height="16" viewBox="0 0 16 16"><rect x="0" y="0" width="6" height="6" fill="#10E010"/><rect x="6" y="1" width="5" height="14" fill="#F8E820" stroke="#666" stroke-width="0.6"/><path d="M7.8 2v12M9.6 2v12" stroke="#222" stroke-width="0.9" stroke-dasharray="1 1"/></svg>
<div class="t" style="left:159px;top:706.5px;line-height:16px;font-size:11.6px;color:#000000;">Module 1 (EL3174-0090)</div>
<svg class="a" style="left:137px;top:727px;" width="8" height="11" viewBox="0 0 8 11"><path d="M1.5 0.5L6 5L1.5 9.5z" fill="none" stroke="#1E1E1E" stroke-width="1"/></svg>
<svg class="a" style="left:156px;top:725px;" width="16" height="16" viewBox="0 0 16 16"><defs><linearGradient id="gF8E020" x1="0" y1="0" x2="1" y2="1"><stop offset="0" stop-color="#F4FF70"/><stop offset="1" stop-color="#F8E020"/></linearGradient></defs><rect x="1.5" y="2.5" width="10" height="8" fill="url(#gF8E020)" stroke="#D0A800"/><rect x="4.5" y="5.5" width="10" height="8" fill="url(#gF8E020)" stroke="#D0A800"/></svg>
<div class="t" style="left:177px;top:724.5px;line-height:16px;font-size:11.6px;color:#000000;">TSC Inputs</div>
<svg class="a" style="left:137px;top:745px;" width="8" height="11" viewBox="0 0 8 11"><path d="M1.5 0.5L6 5L1.5 9.5z" fill="none" stroke="#1E1E1E" stroke-width="1"/></svg>
<svg class="a" style="left:156px;top:743px;" width="16" height="16" viewBox="0 0 16 16"><defs><linearGradient id="gC81818" x1="0" y1="0" x2="1" y2="1"><stop offset="0" stop-color="#F07070"/><stop offset="1" stop-color="#C81818"/></linearGradient></defs><rect x="1.5" y="2.5" width="10" height="8" fill="url(#gC81818)" stroke="#8A0A0A"/><rect x="4.5" y="5.5" width="10" height="8" fill="url(#gC81818)" stroke="#8A0A0A"/></svg>
<div class="t" style="left:177px;top:742.5px;line-height:16px;font-size:11.6px;color:#000000;">TSC Outputs</div>
<svg class="a" style="left:119px;top:763px;" width="8" height="11" viewBox="0 0 8 11"><path d="M1.5 0.5L6 5L1.5 9.5z" fill="none" stroke="#1E1E1E" stroke-width="1"/></svg>
<svg class="a" style="left:138px;top:761px;" width="16" height="16" viewBox="0 0 16 16"><defs><linearGradient id="g20B020" x1="0" y1="0" x2="1" y2="1"><stop offset="0" stop-color="#80F080"/><stop offset="1" stop-color="#20B020"/></linearGradient></defs><rect x="1.5" y="2.5" width="10" height="8" fill="url(#g20B020)" stroke="#0A700A"/><rect x="4.5" y="5.5" width="10" height="8" fill="url(#g20B020)" stroke="#0A700A"/></svg>
<div class="t" style="left:159px;top:760.5px;line-height:16px;font-size:11.6px;color:#000000;">WcState</div>
<svg class="a" style="left:119px;top:781px;" width="8" height="11" viewBox="0 0 8 11"><path d="M1.5 0.5L6 5L1.5 9.5z" fill="none" stroke="#1E1E1E" stroke-width="1"/></svg>
<svg class="a" style="left:138px;top:779px;" width="16" height="16" viewBox="0 0 16 16"><defs><linearGradient id="g20B020" x1="0" y1="0" x2="1" y2="1"><stop offset="0" stop-color="#80F080"/><stop offset="1" stop-color="#20B020"/></linearGradient></defs><rect x="1.5" y="2.5" width="10" height="8" fill="url(#g20B020)" stroke="#0A700A"/><rect x="4.5" y="5.5" width="10" height="8" fill="url(#g20B020)" stroke="#0A700A"/></svg>
<div class="t" style="left:159px;top:778.5px;line-height:16px;font-size:11.6px;color:#000000;">InfoData</div>
<svg class="a" style="left:101px;top:799px;" width="8" height="11" viewBox="0 0 8 11"><path d="M1.5 0.5L6 5L1.5 9.5z" fill="none" stroke="#1E1E1E" stroke-width="1"/></svg>
<svg class="a" style="left:120px;top:797px;" width="16" height="16" viewBox="0 0 16 16"><rect x="0" y="0" width="6" height="6" fill="#7A1A9A"/><rect x="6" y="1" width="5" height="14" fill="#F8E820" stroke="#666" stroke-width="0.6"/><path d="M7.8 2v12M9.6 2v12" stroke="#222" stroke-width="0.9" stroke-dasharray="1 1"/></svg>
<div class="t" style="left:141px;top:796.5px;line-height:16px;font-size:11.6px;color:#000000;">Term 5 (EL2904)</div>
</div>
<div class="a" style="left:406px;top:181px;width:17px;height:809px;background:#E8E8EC;"></div>
<svg class="a" style="left:410px;top:189px;" width="9" height="5" viewBox="0 0 9 5"><path d="M0 5L4.5 0L9 5z" fill="#868999"/></svg>
<svg class="a" style="left:410px;top:978px;" width="9" height="5" viewBox="0 0 9 5"><path d="M0 0h9L4.5 5z" fill="#868999"/></svg>
<div class="a" style="left:410px;top:391px;width:9px;height:523px;background:#C2C3C9;"></div>
<div class="a" style="left:6px;top:990px;width:102px;height:20px;background:#FFFFFF;"></div>
<div class="a" style="left:6px;top:990px;width:1px;height:20px;background:#8E9BBC;"></div>
<div class="t" style="left:12px;top:992.0px;line-height:16px;font-size:12px;color:#1E1E1E;">Solution Explorer</div>
<div class="a" style="left:107px;top:990px;width:87px;height:21px;background:#4D6082;"></div>
<div class="a" style="left:107px;top:990px;width:87px;height:1px;background:#7D8BAE;"></div>
<div class="a" style="left:107px;top:990px;width:1px;height:21px;background:#7D8BAE;"></div>
<div class="t" style="left:115px;top:992.5px;line-height:16px;font-size:12px;color:#FFFFFF;">Team Explorer</div>
<div class="a" style="left:430px;top:109px;width:172px;height:19px;background:#FFF29D;"></div>
<div class="t" style="left:435px;top:112.0px;line-height:16px;font-size:11px;color:#1E1E1E;">TwinSAFEcursus_pretest</div>
<svg class="a" style="left:569px;top:116px;" width="9" height="8" viewBox="0 0 9 8"><path d="M0 3.5H3M3.5 0V7M3.5 1.5H8.5V5.5H3.5" stroke="#6A5A32" stroke-width="1.1" fill="none"/><rect x="3.5" y="5" width="5" height="1.5" fill="#6A5A32"/></svg>
<svg class="a" style="left:587px;top:115px;" width="10" height="9" viewBox="0 0 10 9"><path d="M1 0.5L9 8.5M9 0.5L1 8.5" stroke="#6A5A32" stroke-width="1.3"/></svg>
<div class="a" style="left:430px;top:128px;width:1181px;height:2px;background:#FFF29D;"></div>
<svg class="a" style="left:1599px;top:117px;" width="9" height="5" viewBox="0 0 9 5"><path d="M0 0h9L4.5 5z" fill="#FFFFFF"/></svg>
<div class="a" style="left:430px;top:130px;width:1181px;height:547px;background:#F0F0F0;"></div>
<div class="a" style="left:430px;top:130px;width:1px;height:547px;background:#8E9BBC;"></div>
<div class="a" style="left:1610px;top:130px;width:1px;height:547px;background:#8E9BBC;"></div>
<div class="a" style="left:430px;top:676px;width:1181px;height:1px;background:#8E9BBC;"></div>
<div class="a" style="left:431px;top:130px;width:1179px;height:1px;background:#A0A0A0;"></div>
<div class="a" style="left:431px;top:130px;width:1px;height:546px;background:#A0A0A0;"></div>
<div class="a" style="left:432px;top:131px;width:1177px;height:1px;background:#696969;"></div>
<div class="a" style="left:432px;top:131px;width:1px;height:545px;background:#696969;"></div>
<div class="a" style="left:433px;top:132px;width:1176px;height:1px;background:#FFFFFF;"></div>
<div class="a" style="left:433px;top:132px;width:1px;height:543px;background:#FFFFFF;"></div>
<div class="a" style="left:1608px;top:131px;width:2px;height:545px;background:#FFFFFF;"></div>
<div class="a" style="left:431px;top:675px;width:1179px;height:1px;background:#FFFFFF;"></div>
<div class="a" style="left:440px;top:159px;width:1150px;height:383px;background:#FFFFFF;border:1px solid #DADADA;"></div>
<div class="a" style="left:441px;top:142px;width:48px;height:18px;background:#F0F0F0;border:1px solid #DADADA;border-bottom:none;"></div>
<div class="t" style="left:447px;top:143.0px;line-height:16px;font-size:10.8px;color:#000;transform:scale(0.97,1.12);transform-origin:0 50%;">General</div>
<div class="a" style="left:489px;top:142px;width:58px;height:18px;background:#F0F0F0;border:1px solid #DADADA;border-bottom:none;"></div>
<div class="t" style="left:495px;top:143.0px;line-height:16px;font-size:10.8px;color:#000;transform:scale(0.97,1.12);transform-origin:0 50%;">EtherCAT</div>
<div class="a" style="left:547px;top:142px;width:42px;height:18px;background:#F0F0F0;border:1px solid #DADADA;border-bottom:none;"></div>
<div class="t" style="left:553px;top:143.0px;line-height:16px;font-size:10.8px;color:#000;transform:scale(0.97,1.12);transform-origin:0 50%;">DC</div>
<div class="a" style="left:589px;top:142px;width:76px;height:18px;background:#F0F0F0;border:1px solid #DADADA;border-bottom:none;"></div>
<div class="t" style="left:595px;top:143.0px;line-height:16px;font-size:10.8px;color:#000;transform:scale(0.97,1.12);transform-origin:0 50%;">Process Data</div>
<div class="a" style="left:665px;top:142px;width:42px;height:18px;background:#F0F0F0;border:1px solid #DADADA;border-bottom:none;"></div>
<div class="t" style="left:671px;top:143.0px;line-height:16px;font-size:10.8px;color:#000;transform:scale(0.97,1.12);transform-origin:0 50%;">Plc</div>
<div class="a" style="left:707px;top:142px;width:44px;height:18px;background:#F0F0F0;border:1px solid #DADADA;border-bottom:none;"></div>
<div class="t" style="left:713px;top:143.0px;line-height:16px;font-size:10.8px;color:#000;transform:scale(0.97,1.12);transform-origin:0 50%;">Slots</div>
<div class="a" style="left:751px;top:142px;width:44px;height:18px;background:#F0F0F0;border:1px solid #DADADA;border-bottom:none;"></div>
<div class="t" style="left:757px;top:143.0px;line-height:16px;font-size:10.8px;color:#000;transform:scale(0.97,1.12);transform-origin:0 50%;">Startup</div>
<div class="a" style="left:795px;top:138px;width:72px;height:23px;background:#FFFFFF;border:1px solid #DADADA;border-bottom:none;"></div>
<div class="t" style="left:801px;top:141.0px;line-height:16px;font-size:10.8px;color:#000;transform:scale(0.97,1.12);transform-origin:0 50%;">CoE - Online</div>
<div class="a" style="left:867px;top:142px;width:39px;height:18px;background:#F0F0F0;border:1px solid #DADADA;border-bottom:none;"></div>
<div class="t" style="left:873px;top:143.0px;line-height:16px;font-size:10.8px;color:#000;transform:scale(0.97,1.12);transform-origin:0 50%;">Online</div>
<div class="a" style="left:455px;top:173px;width:129px;height:18px;background:#E1E1E1;border:1px solid #ADADAD;"></div>
<div class="t" style="left:519.5px;top:174.0px;line-height:16px;font-size:10.8px;color:#000;transform:translateX(-50%) scale(0.97,1.12);transform-origin:50% 50%;">Update List</div>
<div class="a" style="left:455px;top:199px;width:129px;height:18px;background:#E1E1E1;border:1px solid #ADADAD;"></div>
<div class="t" style="left:519.5px;top:200.0px;line-height:16px;font-size:10.8px;color:#000;transform:translateX(-50%) scale(0.97,1.12);transform-origin:50% 50%;">Advanced...</div>
<div class="a" style="left:455px;top:225px;width:129px;height:18px;background:#E5F1FB;border:1px solid #0078D7;"></div>
<div class="t" style="left:519.5px;top:226.0px;line-height:16px;font-size:10.8px;color:#000;transform:translateX(-50%) scale(0.97,1.12);transform-origin:50% 50%;">Add to Startup...</div>
<div class="a" style="left:605px;top:177px;width:13px;height:13px;background:#FFFFFF;border:1px solid #333333;"></div>
<div class="t" style="left:621px;top:176.0px;line-height:16px;font-size:10.8px;color:#000;transform:scale(0.97,1.12);transform-origin:0 50%;">Auto Update</div>
<div class="a" style="left:695px;top:177px;width:13px;height:13px;background:#FFFFFF;border:1px solid #333333;"></div>
<svg class="a" style="left:697px;top:179px;" width="9" height="9" viewBox="0 0 9 9"><path d="M1 4.5L3.5 7L8 1.5" fill="none" stroke="#222" stroke-width="1.3"/></svg>
<div class="t" style="left:711px;top:176.0px;line-height:16px;font-size:10.8px;color:#000;transform:scale(0.97,1.12);transform-origin:0 50%;">Single Update</div>
<div class="a" style="left:784px;top:177px;width:13px;height:13px;background:#FFFFFF;border:1px solid #333333;"></div>
<div class="t" style="left:800px;top:176.0px;line-height:16px;font-size:10.8px;color:#000;transform:scale(0.97,1.12);transform-origin:0 50%;">Show Offline Data</div>
<div class="a" style="left:605px;top:198px;width:293px;height:20px;background:#FFFFFF;border:1px solid #7A7A7A;"></div>
<div class="a" style="left:605px;top:224px;width:89px;height:20px;background:#FFFFFF;border:1px solid #7A7A7A;"></div>
<div class="t" style="left:608px;top:226.0px;line-height:16px;font-size:10.8px;color:#008080;transform:scale(0.97,1.12);transform-origin:0 50%;">Online Data</div>
<div class="t" style="left:730px;top:223.0px;line-height:16px;font-size:10.8px;color:#000;transform:scale(0.97,1.12);transform-origin:0 50%;">Module OD (AoE Port):</div>
<div class="a" style="left:842px;top:223px;width:56px;height:20px;background:#FFFFFF;border:1px solid #7A7A7A;"></div>
<div class="t" style="left:845px;top:225.0px;line-height:16px;font-size:10.8px;color:#000;transform:scale(0.97,1.12);transform-origin:0 50%;">0</div>
<div class="a" style="left:454px;top:254px;width:1124px;height:280px;background:#FFFFFF;border:1px solid #828790;"></div>
<div class="a" style="left:540px;top:256px;width:1px;height:24px;background:#E5E5E5;"></div>
<div class="a" style="left:740px;top:256px;width:1px;height:24px;background:#E5E5E5;"></div>
<div class="a" style="left:810px;top:256px;width:1px;height:24px;background:#E5E5E5;"></div>
<div class="a" style="left:990px;top:256px;width:1px;height:24px;background:#E5E5E5;"></div>
<div class="a" style="left:1060px;top:256px;width:1px;height:24px;background:#E5E5E5;"></div>
<div class="t" style="left:462px;top:260.0px;line-height:16px;font-size:10.8px;color:#000;transform:scale(0.97,1.12);transform-origin:0 50%;">Index</div>
<div class="t" style="left:547px;top:260.0px;line-height:16px;font-size:10.8px;color:#000;transform:scale(0.97,1.12);transform-origin:0 50%;">Name</div>
<div class="t" style="left:746px;top:260.0px;line-height:16px;font-size:10.8px;color:#000;transform:scale(0.97,1.12);transform-origin:0 50%;">Flags</div>
<div class="t" style="left:817px;top:260.0px;line-height:16px;font-size:10.8px;color:#000;transform:scale(0.97,1.12);transform-origin:0 50%;">Value</div>
<div class="t" style="left:997px;top:260.0px;line-height:16px;font-size:10.8px;color:#000;transform:scale(0.97,1.12);transform-origin:0 50%;">Unit</div>
<div class="a" style="left:455px;top:255px;width:1103px;height:278px;overflow:hidden">
<svg class="a" style="left:9px;top:33px;" width="1" height="238" viewBox="0 0 1 238"><line x1="0.5" y1="0" x2="0.5" y2="238" stroke="#A0A0A0" stroke-dasharray="1 1"/></svg>
<svg class="a" style="left:25px;top:195px;" width="1" height="26" viewBox="0 0 1 26"><line x1="0.5" y1="0" x2="0.5" y2="26" stroke="#A0A0A0" stroke-dasharray="1 1"/></svg>
<div class="a" style="left:21px;top:25px;width:584px;height:17px;background:#E0FFFF;"></div>
<svg class="a" style="left:10px;top:33px;" width="11" height="1" viewBox="0 0 11 1"><line x1="0" y1="0.5" x2="11" y2="0.5" stroke="#A0A0A0" stroke-dasharray="1 1"/></svg>
<svg class="a" style="left:5px;top:29px;" width="9" height="9" viewBox="0 0 9 9"><rect x="0.5" y="0.5" width="8" height="8" fill="#fff" stroke="#A0A0A0"/><rect x="2" y="4" width="5" height="1" fill="#000"/><rect x="4" y="2" width="1" height="5" fill="#000"/></svg>
<div class="t" style="left:23px;top:25.5px;line-height:16px;font-size:10.8px;color:#000;transform:scale(0.97,1.12);transform-origin:0 50%;">801F:0</div>
<div class="t" style="left:92px;top:25.5px;line-height:16px;font-size:10.8px;color:#000;transform:scale(0.97,1.12);transform-origin:0 50%;">AI Vendor data Ch.2</div>
<div class="t" style="left:291px;top:25.5px;line-height:16px;font-size:10.8px;color:#000;transform:scale(0.97,1.12);transform-origin:0 50%;">RW</div>
<div class="t" style="left:362px;top:25.5px;line-height:16px;font-size:10.8px;color:#000;transform:scale(0.97,1.12);transform-origin:0 50%;">&gt; 6 &lt;</div>
<svg class="a" style="left:10px;top:50px;" width="11" height="1" viewBox="0 0 11 1"><line x1="0" y1="0.5" x2="11" y2="0.5" stroke="#A0A0A0" stroke-dasharray="1 1"/></svg>
<svg class="a" style="left:5px;top:46px;" width="9" height="9" viewBox="0 0 9 9"><rect x="0.5" y="0.5" width="8" height="8" fill="#fff" stroke="#A0A0A0"/><rect x="2" y="4" width="5" height="1" fill="#000"/><rect x="4" y="2" width="1" height="5" fill="#000"/></svg>
<div class="t" style="left:23px;top:42.5px;line-height:16px;font-size:10.8px;color:#000;transform:scale(0.97,1.12);transform-origin:0 50%;">8020:0</div>
<div class="t" style="left:92px;top:42.5px;line-height:16px;font-size:10.8px;color:#000;transform:scale(0.97,1.12);transform-origin:0 50%;">AI Settings Ch.3</div>
<div class="t" style="left:291px;top:42.5px;line-height:16px;font-size:10.8px;color:#000;transform:scale(0.97,1.12);transform-origin:0 50%;">RW</div>
<div class="t" style="left:362px;top:42.5px;line-height:16px;font-size:10.8px;color:#000;transform:scale(0.97,1.12);transform-origin:0 50%;">&gt; 24 &lt;</div>
<div class="a" style="left:21px;top:59px;width:584px;height:17px;background:#E0FFFF;"></div>
<svg class="a" style="left:10px;top:67px;" width="11" height="1" viewBox="0 0 11 1"><line x1="0" y1="0.5" x2="11" y2="0.5" stroke="#A0A0A0" stroke-dasharray="1 1"/></svg>
<svg class="a" style="left:5px;top:63px;" width="9" height="9" viewBox="0 0 9 9"><rect x="0.5" y="0.5" width="8" height="8" fill="#fff" stroke="#A0A0A0"/><rect x="2" y="4" width="5" height="1" fill="#000"/><rect x="4" y="2" width="1" height="5" fill="#000"/></svg>
<div class="t" style="left:23px;top:59.5px;line-height:16px;font-size:10.8px;color:#000;transform:scale(0.97,1.12);transform-origin:0 50%;">802D:0</div>
<div class="t" style="left:92px;top:59.5px;line-height:16px;font-size:10.8px;color:#000;transform:scale(0.97,1.12);transform-origin:0 50%;">AI Advanced Settings Ch.3</div>
<div class="t" style="left:291px;top:59.5px;line-height:16px;font-size:10.8px;color:#000;transform:scale(0.97,1.12);transform-origin:0 50%;">RW</div>
<div class="t" style="left:362px;top:59.5px;line-height:16px;font-size:10.8px;color:#000;transform:scale(0.97,1.12);transform-origin:0 50%;">&gt; 24 &lt;</div>
<svg class="a" style="left:10px;top:84px;" width="11" height="1" viewBox="0 0 11 1"><line x1="0" y1="0.5" x2="11" y2="0.5" stroke="#A0A0A0" stroke-dasharray="1 1"/></svg>
<svg class="a" style="left:5px;top:80px;" width="9" height="9" viewBox="0 0 9 9"><rect x="0.5" y="0.5" width="8" height="8" fill="#fff" stroke="#A0A0A0"/><rect x="2" y="4" width="5" height="1" fill="#000"/><rect x="4" y="2" width="1" height="5" fill="#000"/></svg>
<div class="t" style="left:23px;top:76.5px;line-height:16px;font-size:10.8px;color:#000;transform:scale(0.97,1.12);transform-origin:0 50%;">802E:0</div>
<div class="t" style="left:92px;top:76.5px;line-height:16px;font-size:10.8px;color:#000;transform:scale(0.97,1.12);transform-origin:0 50%;">AI Internal data Ch.3</div>
<div class="t" style="left:291px;top:76.5px;line-height:16px;font-size:10.8px;color:#000;transform:scale(0.97,1.12);transform-origin:0 50%;">RO</div>
<div class="t" style="left:362px;top:76.5px;line-height:16px;font-size:10.8px;color:#000;transform:scale(0.97,1.12);transform-origin:0 50%;">&gt; 1 &lt;</div>
<div class="a" style="left:21px;top:93px;width:584px;height:17px;background:#E0FFFF;"></div>
<svg class="a" style="left:10px;top:101px;" width="11" height="1" viewBox="0 0 11 1"><line x1="0" y1="0.5" x2="11" y2="0.5" stroke="#A0A0A0" stroke-dasharray="1 1"/></svg>
<svg class="a" style="left:5px;top:97px;" width="9" height="9" viewBox="0 0 9 9"><rect x="0.5" y="0.5" width="8" height="8" fill="#fff" stroke="#A0A0A0"/><rect x="2" y="4" width="5" height="1" fill="#000"/><rect x="4" y="2" width="1" height="5" fill="#000"/></svg>
<div class="t" style="left:23px;top:93.5px;line-height:16px;font-size:10.8px;color:#000;transform:scale(0.97,1.12);transform-origin:0 50%;">802F:0</div>
<div class="t" style="left:92px;top:93.5px;line-height:16px;font-size:10.8px;color:#000;transform:scale(0.97,1.12);transform-origin:0 50%;">AI Vendor data Ch.3</div>
<div class="t" style="left:291px;top:93.5px;line-height:16px;font-size:10.8px;color:#000;transform:scale(0.97,1.12);transform-origin:0 50%;">RW</div>
<div class="t" style="left:362px;top:93.5px;line-height:16px;font-size:10.8px;color:#000;transform:scale(0.97,1.12);transform-origin:0 50%;">&gt; 6 &lt;</div>
<svg class="a" style="left:10px;top:118px;" width="11" height="1" viewBox="0 0 11 1"><line x1="0" y1="0.5" x2="11" y2="0.5" stroke="#A0A0A0" stroke-dasharray="1 1"/></svg>
<svg class="a" style="left:5px;top:114px;" width="9" height="9" viewBox="0 0 9 9"><rect x="0.5" y="0.5" width="8" height="8" fill="#fff" stroke="#A0A0A0"/><rect x="2" y="4" width="5" height="1" fill="#000"/><rect x="4" y="2" width="1" height="5" fill="#000"/></svg>
<div class="t" style="left:23px;top:110.5px;line-height:16px;font-size:10.8px;color:#000;transform:scale(0.97,1.12);transform-origin:0 50%;">8030:0</div>
<div class="t" style="left:92px;top:110.5px;line-height:16px;font-size:10.8px;color:#000;transform:scale(0.97,1.12);transform-origin:0 50%;">AI Settings Ch.4</div>
<div class="t" style="left:291px;top:110.5px;line-height:16px;font-size:10.8px;color:#000;transform:scale(0.97,1.12);transform-origin:0 50%;">RW</div>
<div class="t" style="left:362px;top:110.5px;line-height:16px;font-size:10.8px;color:#000;transform:scale(0.97,1.12);transform-origin:0 50%;">&gt; 24 &lt;</div>
<div class="a" style="left:21px;top:127px;width:584px;height:17px;background:#E0FFFF;"></div>
<svg class="a" style="left:10px;top:135px;" width="11" height="1" viewBox="0 0 11 1"><line x1="0" y1="0.5" x2="11" y2="0.5" stroke="#A0A0A0" stroke-dasharray="1 1"/></svg>
<svg class="a" style="left:5px;top:131px;" width="9" height="9" viewBox="0 0 9 9"><rect x="0.5" y="0.5" width="8" height="8" fill="#fff" stroke="#A0A0A0"/><rect x="2" y="4" width="5" height="1" fill="#000"/><rect x="4" y="2" width="1" height="5" fill="#000"/></svg>
<div class="t" style="left:23px;top:127.5px;line-height:16px;font-size:10.8px;color:#000;transform:scale(0.97,1.12);transform-origin:0 50%;">803D:0</div>
<div class="t" style="left:92px;top:127.5px;line-height:16px;font-size:10.8px;color:#000;transform:scale(0.97,1.12);transform-origin:0 50%;">AI Advanced Settings Ch.4</div>
<div class="t" style="left:291px;top:127.5px;line-height:16px;font-size:10.8px;color:#000;transform:scale(0.97,1.12);transform-origin:0 50%;">RW</div>
<div class="t" style="left:362px;top:127.5px;line-height:16px;font-size:10.8px;color:#000;transform:scale(0.97,1.12);transform-origin:0 50%;">&gt; 24 &lt;</div>
<svg class="a" style="left:10px;top:152px;" width="11" height="1" viewBox="0 0 11 1"><line x1="0" y1="0.5" x2="11" y2="0.5" stroke="#A0A0A0" stroke-dasharray="1 1"/></svg>
<svg class="a" style="left:5px;top:148px;" width="9" height="9" viewBox="0 0 9 9"><rect x="0.5" y="0.5" width="8" height="8" fill="#fff" stroke="#A0A0A0"/><rect x="2" y="4" width="5" height="1" fill="#000"/><rect x="4" y="2" width="1" height="5" fill="#000"/></svg>
<div class="t" style="left:23px;top:144.5px;line-height:16px;font-size:10.8px;color:#000;transform:scale(0.97,1.12);transform-origin:0 50%;">803E:0</div>
<div class="t" style="left:92px;top:144.5px;line-height:16px;font-size:10.8px;color:#000;transform:scale(0.97,1.12);transform-origin:0 50%;">AI Internal data Ch.4</div>
<div class="t" style="left:291px;top:144.5px;line-height:16px;font-size:10.8px;color:#000;transform:scale(0.97,1.12);transform-origin:0 50%;">RO</div>
<div class="t" style="left:362px;top:144.5px;line-height:16px;font-size:10.8px;color:#000;transform:scale(0.97,1.12);transform-origin:0 50%;">&gt; 1 &lt;</div>
<div class="a" style="left:21px;top:161px;width:584px;height:17px;background:#E0FFFF;"></div>
<svg class="a" style="left:10px;top:169px;" width="11" height="1" viewBox="0 0 11 1"><line x1="0" y1="0.5" x2="11" y2="0.5" stroke="#A0A0A0" stroke-dasharray="1 1"/></svg>
<svg class="a" style="left:5px;top:165px;" width="9" height="9" viewBox="0 0 9 9"><rect x="0.5" y="0.5" width="8" height="8" fill="#fff" stroke="#A0A0A0"/><rect x="2" y="4" width="5" height="1" fill="#000"/><rect x="4" y="2" width="1" height="5" fill="#000"/></svg>
<div class="t" style="left:23px;top:161.5px;line-height:16px;font-size:10.8px;color:#000;transform:scale(0.97,1.12);transform-origin:0 50%;">803F:0</div>
<div class="t" style="left:92px;top:161.5px;line-height:16px;font-size:10.8px;color:#000;transform:scale(0.97,1.12);transform-origin:0 50%;">AI Vendor data Ch.4</div>
<div class="t" style="left:291px;top:161.5px;line-height:16px;font-size:10.8px;color:#000;transform:scale(0.97,1.12);transform-origin:0 50%;">RW</div>
<div class="t" style="left:362px;top:161.5px;line-height:16px;font-size:10.8px;color:#000;transform:scale(0.97,1.12);transform-origin:0 50%;">&gt; 6 &lt;</div>
<div class="a" style="left:21px;top:178px;width:584px;height:17px;background:#0078D7;"></div>
<svg class="a" style="left:10px;top:186px;" width="11" height="1" viewBox="0 0 11 1"><line x1="0" y1="0.5" x2="11" y2="0.5" stroke="#A0A0A0" stroke-dasharray="1 1"/></svg>
<svg class="a" style="left:5px;top:182px;" width="9" height="9" viewBox="0 0 9 9"><rect x="0.5" y="0.5" width="8" height="8" fill="#fff" stroke="#0078D7" stroke-dasharray="1 1"/><rect x="2" y="4" width="5" height="1" fill="#0078D7"/></svg>
<div class="t" style="left:23px;top:178.5px;line-height:16px;font-size:10.8px;color:#FFFFFF;transform:scale(0.97,1.12);transform-origin:0 50%;">8040:0</div>
<div class="t" style="left:92px;top:178.5px;line-height:16px;font-size:10.8px;color:#FFFFFF;transform:scale(0.97,1.12);transform-origin:0 50%;">TSC Settings</div>
<div class="t" style="left:291px;top:178.5px;line-height:16px;font-size:10.8px;color:#FFFFFF;transform:scale(0.97,1.12);transform-origin:0 50%;">RO</div>
<div class="t" style="left:362px;top:178.5px;line-height:16px;font-size:10.8px;color:#FFFFFF;transform:scale(0.97,1.12);transform-origin:0 50%;">&gt; 2 &lt;</div>
<div class="a" style="left:36px;top:195px;width:569px;height:17px;background:#E0FFFF;"></div>
<svg class="a" style="left:26px;top:203px;" width="11" height="1" viewBox="0 0 11 1"><line x1="0" y1="0.5" x2="11" y2="0.5" stroke="#A0A0A0" stroke-dasharray="1 1"/></svg>
<div class="t" style="left:39px;top:195.5px;line-height:16px;font-size:10.8px;color:#000;transform:scale(0.97,1.12);transform-origin:0 50%;">8040:01</div>
<div class="t" style="left:92px;top:195.5px;line-height:16px;font-size:10.8px;color:#000;transform:scale(0.97,1.12);transform-origin:0 50%;">Address</div>
<div class="t" style="left:291px;top:195.5px;line-height:16px;font-size:10.8px;color:#000;transform:scale(0.97,1.12);transform-origin:0 50%;">RW</div>
<div class="t" style="left:362px;top:195.5px;line-height:16px;font-size:10.8px;color:#000;transform:scale(0.97,1.12);transform-origin:0 50%;">0x000A (10)</div>
<svg class="a" style="left:26px;top:220px;" width="11" height="1" viewBox="0 0 11 1"><line x1="0" y1="0.5" x2="11" y2="0.5" stroke="#A0A0A0" stroke-dasharray="1 1"/></svg>
<div class="t" style="left:39px;top:212.5px;line-height:16px;font-size:10.8px;color:#000;transform:scale(0.97,1.12);transform-origin:0 50%;">8040:02</div>
<div class="t" style="left:92px;top:212.5px;line-height:16px;font-size:10.8px;color:#000;transform:scale(0.97,1.12);transform-origin:0 50%;">Connection Mode</div>
<div class="t" style="left:291px;top:212.5px;line-height:16px;font-size:10.8px;color:#000;transform:scale(0.97,1.12);transform-origin:0 50%;">RW</div>
<div class="t" style="left:362px;top:212.5px;line-height:16px;font-size:10.8px;color:#000;transform:scale(0.97,1.12);transform-origin:0 50%;">TwinSAFE SC CRC1 master (970...</div>
<div class="a" style="left:21px;top:229px;width:584px;height:17px;background:#E0FFFF;"></div>
<svg class="a" style="left:10px;top:237px;" width="11" height="1" viewBox="0 0 11 1"><line x1="0" y1="0.5" x2="11" y2="0.5" stroke="#A0A0A0" stroke-dasharray="1 1"/></svg>
<svg class="a" style="left:5px;top:233px;" width="9" height="9" viewBox="0 0 9 9"><rect x="0.5" y="0.5" width="8" height="8" fill="#fff" stroke="#A0A0A0"/><rect x="2" y="4" width="5" height="1" fill="#000"/><rect x="4" y="2" width="1" height="5" fill="#000"/></svg>
<div class="t" style="left:23px;top:229.5px;line-height:16px;font-size:10.8px;color:#000;transform:scale(0.97,1.12);transform-origin:0 50%;">F000:0</div>
<div class="t" style="left:92px;top:229.5px;line-height:16px;font-size:10.8px;color:#000;transform:scale(0.97,1.12);transform-origin:0 50%;">Modular device profile</div>
<div class="t" style="left:291px;top:229.5px;line-height:16px;font-size:10.8px;color:#000;transform:scale(0.97,1.12);transform-origin:0 50%;">RO</div>
<div class="t" style="left:362px;top:229.5px;line-height:16px;font-size:10.8px;color:#000;transform:scale(0.97,1.12);transform-origin:0 50%;">&gt; 2 &lt;</div>
<svg class="a" style="left:10px;top:254px;" width="11" height="1" viewBox="0 0 11 1"><line x1="0" y1="0.5" x2="11" y2="0.5" stroke="#A0A0A0" stroke-dasharray="1 1"/></svg>
<div class="t" style="left:23px;top:246.5px;line-height:16px;font-size:10.8px;color:#000;transform:scale(0.97,1.12);transform-origin:0 50%;">F008</div>
<div class="t" style="left:92px;top:246.5px;line-height:16px;font-size:10.8px;color:#000;transform:scale(0.97,1.12);transform-origin:0 50%;">Code word</div>
<div class="t" style="left:291px;top:246.5px;line-height:16px;font-size:10.8px;color:#000;transform:scale(0.97,1.12);transform-origin:0 50%;">RW</div>
<div class="t" style="left:362px;top:246.5px;line-height:16px;font-size:10.8px;color:#000;transform:scale(0.97,1.12);transform-origin:0 50%;">0x00000000 (0)</div>
<div class="a" style="left:21px;top:263px;width:584px;height:17px;background:#E0FFFF;"></div>
<svg class="a" style="left:10px;top:271px;" width="11" height="1" viewBox="0 0 11 1"><line x1="0" y1="0.5" x2="11" y2="0.5" stroke="#A0A0A0" stroke-dasharray="1 1"/></svg>
<div class="t" style="left:23px;top:263.5px;line-height:16px;font-size:10.8px;color:#000;transform:scale(0.97,1.12);transform-origin:0 50%;">F009</div>
<div class="t" style="left:92px;top:263.5px;line-height:16px;font-size:10.8px;color:#000;transform:scale(0.97,1.12);transform-origin:0 50%;">Password protection</div>
<div class="t" style="left:291px;top:263.5px;line-height:16px;font-size:10.8px;color:#000;transform:scale(0.97,1.12);transform-origin:0 50%;">RW</div>
<div class="t" style="left:362px;top:263.5px;line-height:16px;font-size:10.8px;color:#000;transform:scale(0.97,1.12);transform-origin:0 50%;">0x00000000 (0)</div>
</div>
<div class="a" style="left:1559px;top:256px;width:18px;height:277px;background:#F0F0F0;"></div>
<svg class="a" style="left:1563px;top:263px;" width="10" height="6" viewBox="0 0 10 6"><path d="M1 5L5 1L9 5" stroke="#606060" stroke-width="1.3" fill="none"/></svg>
<svg class="a" style="left:1563px;top:519px;" width="10" height="6" viewBox="0 0 10 6"><path d="M1 1L5 5L9 1" stroke="#606060" stroke-width="1.3" fill="none"/></svg>
<div class="a" style="left:1560px;top:450px;width:16px;height:57px;background:#CDCDCD;"></div>
<div class="a" style="left:433px;top:542px;width:1175px;height:5px;background:#F0F0F0;"></div>
<div class="a" style="left:433px;top:547px;width:1175px;height:2px;background:#6D6D6D;"></div>
<div class="a" style="left:433px;top:549px;width:1175px;height:126px;background:#FFFFFF;"></div>
<div class="a" style="left:552px;top:552px;width:1px;height:20px;background:#E5E5E5;"></div>
<div class="a" style="left:572px;top:552px;width:1px;height:20px;background:#E5E5E5;"></div>
<div class="a" style="left:692px;top:552px;width:1px;height:20px;background:#E5E5E5;"></div>
<div class="a" style="left:772px;top:552px;width:1px;height:20px;background:#E5E5E5;"></div>
<div class="a" style="left:822px;top:552px;width:1px;height:20px;background:#E5E5E5;"></div>
<div class="a" style="left:880px;top:552px;width:1px;height:20px;background:#E5E5E5;"></div>
<div class="a" style="left:930px;top:552px;width:1px;height:20px;background:#E5E5E5;"></div>
<div class="a" style="left:980px;top:552px;width:1px;height:20px;background:#E5E5E5;"></div>
<div class="a" style="left:1130px;top:552px;width:1px;height:20px;background:#E5E5E5;"></div>
<div class="t" style="left:439px;top:553.0px;line-height:16px;font-size:11.3px;color:#1E1E1E;">Name</div>
<div class="t" style="left:579px;top:553.0px;line-height:16px;font-size:11.3px;color:#1E1E1E;">Online</div>
<div class="t" style="left:699px;top:553.0px;line-height:16px;font-size:11.3px;color:#1E1E1E;">Type</div>
<div class="t" style="left:779px;top:553.0px;line-height:16px;font-size:11.3px;color:#1E1E1E;">Size</div>
<div class="t" style="left:829px;top:553.0px;line-height:16px;font-size:11.3px;color:#1E1E1E;">&gt;Addr...</div>
<div class="t" style="left:887px;top:553.0px;line-height:16px;font-size:11.3px;color:#1E1E1E;">In/Out</div>
<div class="t" style="left:937px;top:553.0px;line-height:16px;font-size:11.3px;color:#1E1E1E;">User ID</div>
<div class="t" style="left:987px;top:553.0px;line-height:16px;font-size:11.3px;color:#1E1E1E;">Linked to</div>
<div class="a" style="left:432px;top:572px;width:1158px;height:103px;overflow:hidden">
<svg class="a" style="left:4px;top:2px;" width="16" height="16" viewBox="0 0 16 16"><rect x="4" y="3" width="10" height="9" fill="#F8D820" stroke="#C8A000"/><path d="M1 6h7M5 3l3 3-3 3" stroke="#E02818" stroke-width="2" fill="none"/><text x="0" y="16" font-size="6" fill="#444" font-family="Liberation Sans">s</text></svg>
<div class="t" style="left:23px;top:2.0px;line-height:16px;font-size:11.3px;color:#1E1E1E;">Status</div>
<div class="t" style="left:147px;top:2.0px;line-height:16px;font-size:11.3px;color:#1E1E1E;">0x8000 (32768)</div>
<div class="t" style="left:267px;top:2.0px;line-height:16px;font-size:11.3px;color:#1E1E1E;">Status_891...</div>
<div class="t" style="left:347px;top:2.0px;line-height:16px;font-size:11.3px;color:#1E1E1E;">2.0</div>
<div class="t" style="left:397px;top:2.0px;line-height:16px;font-size:11.3px;color:#1E1E1E;">83.0</div>
<div class="t" style="left:455px;top:2.0px;line-height:16px;font-size:11.3px;color:#1E1E1E;">Input</div>
<div class="t" style="left:505px;top:2.0px;line-height:16px;font-size:11.3px;color:#1E1E1E;">0</div>
<svg class="a" style="left:4px;top:21px;" width="16" height="16" viewBox="0 0 16 16"><rect x="4" y="3" width="10" height="9" fill="#F8D820" stroke="#C8A000"/><path d="M1 6h7M5 3l3 3-3 3" stroke="#E02818" stroke-width="2" fill="none"/></svg>
<div class="t" style="left:23px;top:21.0px;line-height:16px;font-size:11.3px;color:#1E1E1E;">Value</div>
<div class="t" style="left:147px;top:21.0px;line-height:16px;font-size:11.3px;color:#1E1E1E;">255</div>
<div class="t" style="left:267px;top:21.0px;line-height:16px;font-size:11.3px;color:#1E1E1E;">INT</div>
<div class="t" style="left:347px;top:21.0px;line-height:16px;font-size:11.3px;color:#1E1E1E;">2.0</div>
<div class="t" style="left:397px;top:21.0px;line-height:16px;font-size:11.3px;color:#1E1E1E;">85.0</div>
<div class="t" style="left:455px;top:21.0px;line-height:16px;font-size:11.3px;color:#1E1E1E;">Input</div>
<div class="t" style="left:505px;top:21.0px;line-height:16px;font-size:11.3px;color:#1E1E1E;">0</div>
<svg class="a" style="left:4px;top:40px;" width="16" height="16" viewBox="0 0 16 16"><rect x="4" y="3" width="10" height="9" fill="#F8D820" stroke="#C8A000"/><path d="M1 6h7M5 3l3 3-3 3" stroke="#E02818" stroke-width="2" fill="none"/><text x="0" y="16" font-size="6" fill="#444" font-family="Liberation Sans">s</text></svg>
<div class="t" style="left:23px;top:40.0px;line-height:16px;font-size:11.3px;color:#1E1E1E;">Status</div>
<div class="t" style="left:147px;top:40.0px;line-height:16px;font-size:11.3px;color:#1E1E1E;">0x8000 (32768)</div>
<div class="t" style="left:267px;top:40.0px;line-height:16px;font-size:11.3px;color:#1E1E1E;">Status_891...</div>
<div class="t" style="left:347px;top:40.0px;line-height:16px;font-size:11.3px;color:#1E1E1E;">2.0</div>
<div class="t" style="left:397px;top:40.0px;line-height:16px;font-size:11.3px;color:#1E1E1E;">87.0</div>
<div class="t" style="left:455px;top:40.0px;line-height:16px;font-size:11.3px;color:#1E1E1E;">Input</div>
<div class="t" style="left:505px;top:40.0px;line-height:16px;font-size:11.3px;color:#1E1E1E;">0</div>
<svg class="a" style="left:4px;top:59px;" width="16" height="16" viewBox="0 0 16 16"><rect x="4" y="3" width="10" height="9" fill="#F8D820" stroke="#C8A000"/><path d="M1 6h7M5 3l3 3-3 3" stroke="#E02818" stroke-width="2" fill="none"/></svg>
<div class="t" style="left:23px;top:59.0px;line-height:16px;font-size:11.3px;color:#1E1E1E;">Value</div>
<div class="t" style="left:147px;top:59.0px;line-height:16px;font-size:11.3px;color:#1E1E1E;">-4</div>
<div class="t" style="left:267px;top:59.0px;line-height:16px;font-size:11.3px;color:#1E1E1E;">INT</div>
<div class="t" style="left:347px;top:59.0px;line-height:16px;font-size:11.3px;color:#1E1E1E;">2.0</div>
<div class="t" style="left:397px;top:59.0px;line-height:16px;font-size:11.3px;color:#1E1E1E;">89.0</div>
<div class="t" style="left:455px;top:59.0px;line-height:16px;font-size:11.3px;color:#1E1E1E;">Input</div>
<div class="t" style="left:505px;top:59.0px;line-height:16px;font-size:11.3px;color:#1E1E1E;">0</div>
<svg class="a" style="left:4px;top:78px;" width="16" height="16" viewBox="0 0 16 16"><rect x="4" y="3" width="10" height="9" fill="#F8D820" stroke="#C8A000"/><path d="M1 6h7M5 3l3 3-3 3" stroke="#E02818" stroke-width="2" fill="none"/><text x="0" y="16" font-size="6" fill="#444" font-family="Liberation Sans">s</text></svg>
<div class="t" style="left:23px;top:78.0px;line-height:16px;font-size:11.3px;color:#1E1E1E;">Status</div>
<div class="t" style="left:147px;top:78.0px;line-height:16px;font-size:11.3px;color:#1E1E1E;">0x8000 (32768)</div>
<div class="t" style="left:267px;top:78.0px;line-height:16px;font-size:11.3px;color:#1E1E1E;">Status_891...</div>
<div class="t" style="left:347px;top:78.0px;line-height:16px;font-size:11.3px;color:#1E1E1E;">2.0</div>
<div class="t" style="left:397px;top:78.0px;line-height:16px;font-size:11.3px;color:#1E1E1E;">91.0</div>
<div class="t" style="left:455px;top:78.0px;line-height:16px;font-size:11.3px;color:#1E1E1E;">Input</div>
<div class="t" style="left:505px;top:78.0px;line-height:16px;font-size:11.3px;color:#1E1E1E;">0</div>
<svg class="a" style="left:4px;top:97px;" width="16" height="16" viewBox="0 0 16 16"><rect x="4" y="3" width="10" height="9" fill="#F8D820" stroke="#C8A000"/><path d="M1 6h7M5 3l3 3-3 3" stroke="#E02818" stroke-width="2" fill="none"/></svg>
<div class="t" style="left:23px;top:97.0px;line-height:16px;font-size:11.3px;color:#1E1E1E;">Value</div>
<div class="t" style="left:147px;top:97.0px;line-height:16px;font-size:11.3px;color:#1E1E1E;">0</div>
<div class="t" style="left:267px;top:97.0px;line-height:16px;font-size:11.3px;color:#1E1E1E;">INT</div>
<div class="t" style="left:347px;top:97.0px;line-height:16px;font-size:11.3px;color:#1E1E1E;">2.0</div>
<div class="t" style="left:397px;top:97.0px;line-height:16px;font-size:11.3px;color:#1E1E1E;">93.0</div>
<div class="t" style="left:455px;top:97.0px;line-height:16px;font-size:11.3px;color:#1E1E1E;">Input</div>
<div class="t" style="left:505px;top:97.0px;line-height:16px;font-size:11.3px;color:#1E1E1E;">0</div>
</div>
<div class="a" style="left:1591px;top:549px;width:18px;height:127px;background:#F0F0F0;"></div>
<svg class="a" style="left:1595px;top:556px;" width="10" height="6" viewBox="0 0 10 6"><path d="M1 5L5 1L9 5" stroke="#606060" stroke-width="1.3" fill="none"/></svg>
<svg class="a" style="left:1595px;top:662px;" width="10" height="6" viewBox="0 0 10 6"><path d="M1 1L5 5L9 1" stroke="#606060" stroke-width="1.3" fill="none"/></svg>
<div class="a" style="left:1592px;top:566px;width:16px;height:33px;background:#CDCDCD;"></div>
<div class="a" style="left:430px;top:683px;width:1181px;height:308px;background:#8E9BBC;"></div>
<div class="a" style="left:431px;top:684px;width:1179px;height:306px;background:#FFFFFF;"></div>
<div class="a" style="left:431px;top:684px;width:1179px;height:21px;background:#4D6082;"></div>
<div class="t" style="left:435px;top:686.5px;line-height:16px;font-size:12px;color:#FFFFFF;">Error List</div>
<svg class="a" style="left:1562px;top:692px;" width="9" height="5" viewBox="0 0 9 5"><path d="M0 0h9L4.5 5z" fill="#FFFFFF"/></svg>
<svg class="a" style="left:1577px;top:688px;" width="10" height="13" viewBox="0 0 10 13"><path d="M2 1h6M3 1v7M7 1v7M1 8h8M5 8v5" stroke="#FFFFFF" stroke-width="1.3" fill="none"/></svg>
<svg class="a" style="left:1593px;top:689px;" width="11" height="11" viewBox="0 0 11 11"><path d="M1 1L10 10M10 1L1 10" stroke="#FFFFFF" stroke-width="1.4"/></svg>
<div class="a" style="left:431px;top:705px;width:1179px;height:26px;background:#CFD6E5;"></div>
<div class="a" style="left:438px;top:708px;width:150px;height:20px;background:#FCFCFC;border:1px solid #CCCEDB;"></div>
<svg class="a" style="left:576px;top:716px;" width="7" height="4" viewBox="0 0 7 4"><path d="M0 0h7L3.5 4z" fill="#424242"/></svg>
<div class="a" style="left:595px;top:710px;width:1px;height:16px;background:#A5AEC0;"></div>
<svg class="a" style="left:602px;top:710px;" width="16" height="16" viewBox="0 0 16 16"><circle cx="8" cy="8" r="7.5" fill="#E51400"/><circle cx="8" cy="8" r="6" fill="#E51400" stroke="#fff" stroke-width="0"/><path d="M5 5l6 6M11 5l-6 6" stroke="#fff" stroke-width="2"/></svg>
<div class="t" style="left:622px;top:710.0px;line-height:16px;font-size:12px;color:#1E1E1E;">Errors</div>
<div class="a" style="left:663px;top:710px;width:1px;height:16px;background:#A5AEC0;"></div>
<svg class="a" style="left:671px;top:710px;" width="16" height="16" viewBox="0 0 16 16"><path d="M8 1L15.5 15H0.5z" fill="#FFCC00"/><rect x="7" y="5" width="2" height="6" fill="#1E1E1E"/><rect x="7" y="12" width="2" height="2" fill="#1E1E1E"/></svg>
<div class="t" style="left:691px;top:710.0px;line-height:16px;font-size:12px;color:#1E1E1E;">Warnings</div>
<div class="a" style="left:752px;top:710px;width:1px;height:16px;background:#A5AEC0;"></div>
<svg class="a" style="left:760px;top:710px;" width="16" height="16" viewBox="0 0 16 16"><circle cx="8" cy="8" r="7.5" fill="#1BA1E2"/><rect x="7" y="7" width="2.2" height="6" fill="#fff"/><circle cx="8.1" cy="4.5" r="1.3" fill="#fff"/></svg>
<div class="t" style="left:780px;top:710.0px;line-height:16px;font-size:12px;color:#1E1E1E;">Messages</div>
<div class="a" style="left:842px;top:710px;width:1px;height:16px;background:#A5AEC0;"></div>
<svg class="a" style="left:850px;top:710px;" width="14" height="14" viewBox="0 0 14 14"><path d="M2 2l10 10M12 2L2 12" stroke="#BCC0C8" stroke-width="2"/></svg>
<div class="t" style="left:872px;top:710.0px;line-height:16px;font-size:12px;color:#8E9099;">Clear</div>
<div class="a" style="left:910px;top:710px;width:1px;height:16px;background:#A5AEC0;"></div>
<div class="a" style="left:918px;top:708px;width:149px;height:20px;background:#FCFCFC;border:1px solid #CCCEDB;"></div>
<svg class="a" style="left:1057px;top:716px;" width="7" height="4" viewBox="0 0 7 4"><path d="M0 0h7L3.5 4z" fill="#424242"/></svg>
<div class="a" style="left:1410px;top:708px;width:198px;height:20px;background:#FCFCFC;border:1px solid #CCCEDB;"></div>
<div class="t" style="left:1414px;top:710.0px;line-height:16px;font-size:11.7px;color:#6D6D6D;">Search Error List</div>
<svg class="a" style="left:1580px;top:711px;" width="14" height="14" viewBox="0 0 14 14"><circle cx="9" cy="5" r="3.8" fill="none" stroke="#555" stroke-width="1.6"/><path d="M6.5 7.5L1.5 12.5" stroke="#555" stroke-width="2.2"/></svg>
<svg class="a" style="left:1598px;top:716px;" width="7" height="4" viewBox="0 0 7 4"><path d="M0 0h7L3.5 4z" fill="#555"/></svg>
<div class="a" style="left:430px;top:990px;width:58px;height:20px;background:#FFFFFF;"></div>
<div class="a" style="left:430px;top:990px;width:1px;height:20px;background:#8E9BBC;"></div>
<div class="t" style="left:436px;top:992.0px;line-height:16px;font-size:12px;color:#1E1E1E;">Error List</div>
<div class="a" style="left:487px;top:990px;width:51px;height:21px;background:#4D6082;"></div>
<div class="a" style="left:487px;top:990px;width:51px;height:1px;background:#7D8BAE;"></div>
<div class="a" style="left:487px;top:990px;width:1px;height:21px;background:#7D8BAE;"></div>
<div class="t" style="left:494px;top:992.5px;line-height:16px;font-size:12px;color:#FFFFFF;">Output</div>
<div class="a" style="left:1617px;top:109px;width:297px;height:882px;background:#8E9BBC;"></div>
<div class="a" style="left:1618px;top:110px;width:295px;height:880px;background:#FFFFFF;"></div>
<div class="a" style="left:1618px;top:110px;width:295px;height:21px;background:#4D6082;"></div>
<div class="t" style="left:1622px;top:112.5px;line-height:16px;font-size:12px;color:#FFFFFF;">Properties</div>
<svg class="a" style="left:1865px;top:118px;" width="9" height="5" viewBox="0 0 9 5"><path d="M0 0h9L4.5 5z" fill="#FFFFFF"/></svg>
<svg class="a" style="left:1880px;top:114px;" width="10" height="13" viewBox="0 0 10 13"><path d="M2 1h6M3 1v7M7 1v7M1 8h8M5 8v5" stroke="#FFFFFF" stroke-width="1.3" fill="none"/></svg>
<svg class="a" style="left:1896px;top:115px;" width="11" height="11" viewBox="0 0 11 11"><path d="M1 1L10 10M10 1L1 10" stroke="#FFFFFF" stroke-width="1.4"/></svg>
<div class="t" style="left:1624px;top:135.0px;line-height:16px;font-size:12px;color:#1E1E1E;font-weight:bold;">Term 4 (EL3174-0090)</div>
<div class="a" style="left:1754px;top:131px;width:144px;height:24px;overflow:hidden">
<div class="t" style="left:0px;top:4.0px;line-height:16px;font-size:11.6px;color:#1E1E1E;">EL3174-0090 4Ch. Ana. Input</div>
</div>
<svg class="a" style="left:1903px;top:141px;" width="7" height="4" viewBox="0 0 7 4"><path d="M0 0h7L3.5 4z" fill="#1E1E1E"/></svg>
<div class="a" style="left:1618px;top:156px;width:295px;height:25px;background:#CFD6E5;"></div>
<div class="a" style="left:1621px;top:157px;width:23px;height:23px;background:#FCFCF4;border:1px solid #3D4F72;"></div>
<svg class="a" style="left:1624px;top:160px;" width="16" height="16" viewBox="0 0 16 16"><rect x="1" y="1" width="5" height="5" fill="#1E1E1E"/><rect x="2.5" y="3" width="2" height="1" fill="#fff"/><rect x="3" y="2.5" width="1" height="2" fill="#fff"/><rect x="1" y="10" width="5" height="5" fill="#1E1E1E"/><rect x="2.5" y="12" width="2" height="1" fill="#fff"/><rect x="8" y="1" width="5" height="1" fill="#1E1E1E"/><rect x="8" y="3" width="7" height="1" fill="#1E1E1E"/><rect x="8" y="5" width="7" height="1" fill="#1E1E1E"/><rect x="8" y="7" width="7" height="1" fill="#1E1E1E"/><rect x="8" y="10" width="5" height="1" fill="#1E1E1E"/><rect x="8" y="12" width="5" height="1" fill="#1E1E1E"/><rect x="14" y="12" width="1" height="1" fill="#1E1E1E"/></svg>
<svg class="a" style="left:1647px;top:160px;" width="18" height="16" viewBox="0 0 18 16"><text x="1" y="8" font-size="8" font-weight="bold" fill="#333" font-family="Liberation Sans">A</text><text x="1" y="15" font-size="8" font-weight="bold" fill="#333" font-family="Liberation Sans">Z</text><path d="M13 2v11M10 10l3 3 3-3" stroke="#00539C" stroke-width="1.8" fill="none"/></svg>
<div class="a" style="left:1670px;top:160px;width:1px;height:16px;background:#A5AEC0;"></div>
<svg class="a" style="left:1676px;top:160px;" width="16" height="16" viewBox="0 0 16 16"><path d="M1.5 14.5L8 8" stroke="#A5A8B0" stroke-width="2.6" stroke-linecap="round"/><path d="M7 9A4.5 4.5 0 0 1 12.5 2.2L10.3 4.4l.8 1.8 1.8.8 2.2-2.2A4.5 4.5 0 0 1 8.6 10.3z" fill="#A5A8B0"/></svg>
<div class="a" style="left:1618px;top:181px;width:295px;height:136px;background:#EEEEF2;"></div>
<div class="a" style="left:1621px;top:186.5px;width:10px;height:10px;background:#FFFFFF;border:1px solid #1E1E1E;"></div>
<div class="a" style="left:1623px;top:191.0px;width:6px;height:1px;background:#1E1E1E;"></div>
<div class="t" style="left:1637px;top:184.0px;line-height:16px;font-size:12px;color:#1E1E1E;font-weight:bold;">Misc</div>
<div class="a" style="left:1633px;top:202px;width:128px;height:18px;background:#FFFFFF;"></div>
<div class="a" style="left:1762px;top:202px;width:151px;height:18px;background:#FFFFFF;"></div>
<div class="t" style="left:1637px;top:203.0px;line-height:16px;font-size:12px;color:#1E1E1E;">(Name)</div>
<div class="a" style="left:1765px;top:202px;width:148px;height:18px;overflow:hidden">
<div class="t" style="left:0px;top:1.0px;line-height:16px;font-size:12px;color:#1E1E1E;font-weight:bold;">Term 4 (EL3174-0090)</div>
</div>
<div class="a" style="left:1633px;top:221px;width:128px;height:18px;background:#FFFFFF;"></div>
<div class="a" style="left:1762px;top:221px;width:151px;height:18px;background:#FFFFFF;"></div>
<div class="t" style="left:1637px;top:222.0px;line-height:16px;font-size:12px;color:#1E1E1E;">Disabled</div>
<div class="a" style="left:1765px;top:221px;width:148px;height:18px;overflow:hidden">
<div class="t" style="left:0px;top:1.0px;line-height:16px;font-size:12px;color:#1E1E1E;font-weight:bold;">Enabled</div>
</div>
<div class="a" style="left:1633px;top:240px;width:128px;height:18px;background:#FFFFFF;"></div>
<div class="a" style="left:1762px;top:240px;width:151px;height:18px;background:#FFFFFF;"></div>
<div class="t" style="left:1637px;top:241.0px;line-height:16px;font-size:12px;color:#8A8A8A;">ItemType</div>
<div class="a" style="left:1765px;top:240px;width:148px;height:18px;overflow:hidden">
<div class="t" style="left:0px;top:1.0px;line-height:16px;font-size:12px;color:#8A8A8A;font-weight:bold;">5</div>
</div>
<div class="a" style="left:1633px;top:259px;width:128px;height:18px;background:#FFFFFF;"></div>
<div class="a" style="left:1762px;top:259px;width:151px;height:18px;background:#FFFFFF;"></div>
<div class="t" style="left:1637px;top:260.0px;line-height:16px;font-size:12px;color:#8A8A8A;">PathName</div>
<div class="a" style="left:1765px;top:259px;width:148px;height:18px;overflow:hidden">
<div class="t" style="left:0px;top:1.0px;line-height:16px;font-size:12px;color:#8A8A8A;font-weight:bold;">TIID^Device 1 (EtherCAT)^</div>
</div>
<div class="a" style="left:1621px;top:282.0px;width:10px;height:10px;background:#FFFFFF;border:1px solid #1E1E1E;"></div>
<div class="a" style="left:1623px;top:286.5px;width:6px;height:1px;background:#1E1E1E;"></div>
<div class="t" style="left:1637px;top:279.5px;line-height:16px;font-size:12px;color:#1E1E1E;font-weight:bold;">Persistent</div>
<div class="a" style="left:1633px;top:297px;width:128px;height:18px;background:#FFFFFF;"></div>
<div class="a" style="left:1762px;top:297px;width:151px;height:18px;background:#FFFFFF;"></div>
<div class="t" style="left:1637px;top:298.0px;line-height:16px;font-size:12px;color:#1E1E1E;">Save in own File</div>
<div class="a" style="left:1765px;top:297px;width:148px;height:18px;overflow:hidden">
<div class="t" style="left:0px;top:1.0px;line-height:16px;font-size:12px;color:#1E1E1E;font-weight:bold;">False</div>
</div>
<div class="a" style="left:1618px;top:317px;width:295px;height:610px;background:#FFFFFF;"></div>
<div class="a" style="left:1618px;top:927px;width:295px;height:1px;background:#E5E5EA;"></div>
<div class="t" style="left:1624px;top:934.0px;line-height:16px;font-size:12px;color:#1E1E1E;font-weight:bold;">Misc</div>
<div class="a" style="left:1617px;top:990px;width:65px;height:20px;background:#FFFFFF;"></div>
<div class="a" style="left:1617px;top:990px;width:1px;height:20px;background:#8E9BBC;"></div>
<div class="t" style="left:1623px;top:992.0px;line-height:16px;font-size:12px;color:#1E1E1E;">Properties</div>
<div class="a" style="left:1681px;top:990px;width:55px;height:21px;background:#4D6082;"></div>
<div class="a" style="left:1681px;top:990px;width:55px;height:1px;background:#7D8BAE;"></div>
<div class="a" style="left:1681px;top:990px;width:1px;height:21px;background:#7D8BAE;"></div>
<div class="t" style="left:1689px;top:992.5px;line-height:16px;font-size:12px;color:#FFFFFF;">Toolbox</div>
<div class="a" style="left:0px;top:1017px;width:1920px;height:23px;background:#007ACC;"></div>
<svg class="a" style="left:5px;top:1021px;" width="16" height="14" viewBox="0 0 16 14"><path d="M4 1.5h11L12 12.5H1z" fill="none" stroke="#FFFFFF" stroke-width="1.2"/></svg>
<div class="t" style="left:28px;top:1021.0px;line-height:16px;font-size:12px;color:#FFFFFF;">Ready</div>
<svg class="a" style="left:1479px;top:1021px;" width="33" height="16" viewBox="0 0 33 16"><rect x="0.5" y="0.5" width="32" height="15" fill="#E6DAD4"/><rect x="1" y="1" width="14" height="11" fill="#38B838"/><rect x="16" y="1" width="15" height="11" fill="#007ACC"/><rect x="0" y="12" width="33" height="4" fill="#E8C000"/><circle cx="9.5" cy="8" r="3" fill="#CCC" stroke="#CCC" stroke-width="2" stroke-dasharray="1.5 1.2"/><circle cx="9.5" cy="8" r="1" fill="#38B838"/><path d="M26.5 10.5V3.5l-2 1.5" stroke="#fff" stroke-width="2" fill="none"/></svg>
<svg class="a" style="left:1752px;top:1021px;" width="12" height="15" viewBox="0 0 12 15"><path d="M6 1v14M1 6l5-5 5 5" stroke="#FFFFFF" stroke-width="1.8" fill="none"/></svg>
<div class="t" style="left:1773px;top:1021.0px;line-height:16px;font-size:12px;color:#FFFFFF;">Add to Source Control</div>
<svg class="a" style="left:1896px;top:1025px;" width="10" height="6" viewBox="0 0 10 6"><path d="M0 6L5 0l5 6z" fill="#FFFFFF"/></svg>
<div class="a" style="left:0;top:1040px;width:1920px;height:40px;background:linear-gradient(90deg,#342b27 0px,#3a312d 440px,#2c231f 760px,#433a36 1075px,#3e3532 1350px,#3c3330 1920px)"></div>
<svg class="a" style="left:16px;top:1052px;" width="16" height="16" viewBox="0 0 16 16"><path d="M0 2.3L6.8 1.4V7.4H0zM7.8 1.3L16 0.2V7.4H7.8zM0 8.6H6.8V14.6L0 13.7zM7.8 8.6H16V15.8L7.8 14.7z" fill="#FFFFFF"/></svg>
<svg class="a" style="left:63px;top:1051px;" width="18" height="17" viewBox="0 0 18 17"><path d="M1 3.5V1.5H13V3.5M1 13.5V15.5H13V13.5" fill="none" stroke="#fff" stroke-width="1.2"/><rect x="2.5" y="5.5" width="9" height="6" fill="none" stroke="#fff" stroke-width="1.2"/><rect x="15" y="1" width="2" height="3" fill="#fff"/><rect x="15.5" y="5" width="1" height="11" fill="#fff"/></svg>
<svg class="a" style="left:111px;top:1049px;" width="24" height="22" viewBox="0 0 24 22"><path d="M1 4h8l2 2h12v15H1z" fill="#E8B64A"/><path d="M1 8h22v13H1z" fill="#F6CE5A"/><rect x="8" y="14" width="8" height="7" fill="#2B7CD3"/></svg>
<svg class="a" style="left:161px;top:1049px;" width="22" height="22" viewBox="0 0 22 22"><path d="M11 11L1.91 5.75A10.5 10.5 0 0 1 20.09 5.75Z" fill="#DB4437"/><path d="M11 11L20.09 5.75A10.5 10.5 0 0 1 11 21.5Z" fill="#F4C20D"/><path d="M11 11L11 21.5A10.5 10.5 0 0 1 1.91 5.75Z" fill="#0F9D58"/><circle cx="11" cy="11" r="5" fill="#fff"/><circle cx="11" cy="11" r="3.9" fill="#4285F4"/></svg>
<svg class="a" style="left:208px;top:1048px;" width="24" height="24" viewBox="0 0 24 24"><path d="M4 4l14-2 3 18-14 2z" fill="#CFE6F4" stroke="#8FB6D0"/><path d="M5 6l13-2" stroke="#9ACDE8" stroke-width="2"/></svg>
<svg class="a" style="left:258px;top:1050px;" width="22" height="19" viewBox="0 0 22 19"><rect x="0.5" y="0.5" width="21" height="18" fill="#000" stroke="#9a9a9a"/><rect x="1" y="1" width="20" height="2" fill="#cfcfcf"/><text x="3" y="10" font-size="6" fill="#ddd" font-family="Liberation Mono">C:\</text><rect x="12" y="9" width="7" height="1.2" fill="#ddd"/></svg>
<svg class="a" style="left:308px;top:1048px;" width="20" height="24" viewBox="0 0 20 24"><path d="M1 1h13l5 5v17H1z" fill="#fff" stroke="#2A6EBB"/><path d="M14 1v5h5" fill="#2A6EBB"/><rect x="4" y="8" width="12" height="3" fill="#2A6EBB"/><path d="M4 14h12M4 17h12M4 20h8" stroke="#2A6EBB" stroke-width="1.3"/></svg>
<div class="a" style="left:344px;top:1040px;width:48px;height:40px;background:rgba(255,255,255,0.18);"></div>
<svg class="a" style="left:356px;top:1048px;" width="24" height="24" viewBox="0 0 24 24"><defs><linearGradient id="tg" x1="0" y1="0" x2="1" y2="1"><stop offset="0" stop-color="#F2CF45"/><stop offset="1" stop-color="#C08E0C"/></linearGradient></defs><rect x="0" y="0" width="24" height="24" fill="url(#tg)"/><path d="M12 3.5A8.5 8.5 0 0 0 12 20.5" fill="none" stroke="#A87A05" stroke-width="1.1"/><path d="M12 3.5h2l.5 2 2-1 1.3 1.3-1 2 2 .5v2h2v3h-2v2l-2 .5 1 2-1.3 1.3-2-1-.5 2h-2" fill="none" stroke="#A87A05" stroke-width="1.1"/><path d="M12 2v20" stroke="#A87A05" stroke-width="1.1"/><path d="M8 12l3-2 2 3" fill="none" stroke="#A87A05"/></svg>
<div class="a" style="left:344px;top:1078px;width:48px;height:2px;background:#76B9ED;"></div>
<svg class="a" style="left:404px;top:1049px;" width="24" height="22" viewBox="0 0 24 22"><ellipse cx="11" cy="13" rx="10" ry="8" fill="#DDE7EF" stroke="#6E8AA5"/><circle cx="6" cy="11" r="2" fill="#E34234"/><circle cx="10" cy="8" r="2" fill="#3FA34D"/><circle cx="15" cy="9" r="2" fill="#2D6FD1"/><path d="M14 18L23 2" stroke="#E39A2D" stroke-width="2.5"/></svg>
<div class="a" style="left:397px;top:1078px;width:40px;height:2px;background:#76B9ED;"></div>
<svg class="a" style="left:1669px;top:1055px;" width="14" height="8" viewBox="0 0 14 8"><path d="M1 7l6-6 6 6" stroke="#fff" stroke-width="1.3" fill="none"/></svg>
<svg class="a" style="left:1691px;top:1053px;" width="20" height="14" viewBox="0 0 20 14"><rect x="5" y="3" width="13" height="9" fill="none" stroke="#fff" stroke-width="1.3"/><rect x="18" y="6" width="2" height="3" fill="#fff"/><path d="M1 1v4M4 1v4M0 5h5M2.5 5v5h3" stroke="#fff" stroke-width="1.2" fill="none"/><rect x="7" y="5" width="9" height="5" fill="#fff"/></svg>
<svg class="a" style="left:1717px;top:1052px;" width="18" height="17" viewBox="0 0 18 17"><path d="M2 16a14 14 0 0 1 14-14M5 16a11 11 0 0 1 11-11M8 16a8 8 0 0 1 8-8" stroke="#888" stroke-width="1.2" fill="none"/><circle cx="15" cy="15" r="2" fill="#fff"/></svg>
<svg class="a" style="left:1740px;top:1051.5px;" width="18" height="17" viewBox="0 0 18 17"><path d="M1 6h4l5-4v13l-5-4H1z" fill="none" stroke="#fff" stroke-width="1.2"/><path d="M12 5a4 4 0 0 1 0 7M14 3a7 7 0 0 1 0 11" stroke="#fff" stroke-width="1.2" fill="none"/></svg>
<div class="t" style="left:1778px;top:1051.5px;line-height:16px;font-size:12px;color:#FFFFFF;transform:translateX(-50%) ;">ENG</div>
<div class="t" style="left:1831px;top:1043.0px;line-height:16px;font-size:12px;color:#FFFFFF;transform:translateX(-50%) ;">11:29</div>
<div class="t" style="left:1831px;top:1061.0px;line-height:16px;font-size:12px;color:#FFFFFF;transform:translateX(-50%) ;">26/06/2020</div>
<svg class="a" style="left:1879px;top:1051px;" width="17" height="17" viewBox="0 0 17 17"><path d="M1 1h15v11H9l-1 3-1-3H1z" fill="#fff"/><path d="M4 4h9M4 6.5h9M4 9h6" stroke="#333" stroke-width="1"/></svg>
<div class="a" style="left:1916px;top:1040px;width:1px;height:40px;background:#5A5050;"></div>
</body></html>
